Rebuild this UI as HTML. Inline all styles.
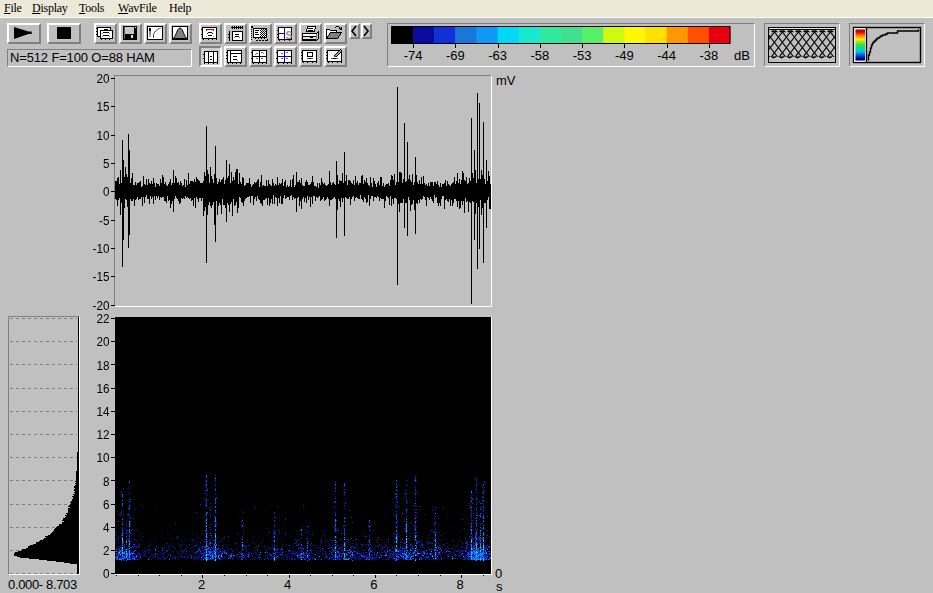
<!DOCTYPE html>
<html><head><meta charset="utf-8"><style>
html,body{margin:0;padding:0}
body{width:933px;height:593px;overflow:hidden;background:#c0c0c0;position:relative;font-family:"Liberation Sans",sans-serif}
#menu{position:absolute;left:0;top:0;width:933px;height:17px;background:#ece9d8;border-bottom:1px solid #fdfdfa}
.mi{position:absolute;top:1px;font-family:"Liberation Serif",serif;font-size:12px;line-height:14px;color:#000;letter-spacing:-0.25px}
.mi u{text-decoration:underline;text-underline-offset:1px}
.btn{position:absolute;box-sizing:border-box;border:2px solid;border-color:#fff #808080 #808080 #fff;background:#c0c0c0}
.btn.pr{border-color:#808080 #fff #fff #808080;background:repeating-conic-gradient(#dcdcdc 0 25%,#c0c0c0 0 50%) 0 0/2px 2px}
.btn svg{margin:-2px}
.sunk{position:absolute;box-sizing:border-box;border:1px solid;border-color:#808080 #fff #fff #808080}
.txt{position:absolute;font-size:13px;line-height:15px;color:#000;white-space:nowrap}
.c{text-align:center}
.lab{position:absolute;left:60px;width:49.5px;text-align:right;font-size:13.6px;line-height:15px;color:#000;transform:scaleX(0.86);transform-origin:100% 50%}
.tick{position:absolute;left:111px;width:4px;height:1px;background:#000}
.blk{position:absolute;box-sizing:border-box;border:2px solid #000}
</style></head><body>
<div id="menu"></div>
<div class="mi" style="left:4px"><u>F</u>ile</div>
<div class="mi" style="left:32px"><u>D</u>isplay</div>
<div class="mi" style="left:79px"><u>T</u>ools</div>
<div class="mi" style="left:118px"><u>W</u>avFile</div>
<div class="mi" style="left:169px">Help</div>
<div class="btn" style="left:7px;top:23px;width:34px;height:21px"><svg width="34" height="21" style="position:absolute;left:0;top:0"><polygon points="7,3.9 21.5,8.6 24.7,8.6 24.7,10.9 21.5,10.9 7,16" fill="#000"/></svg></div>
<div class="btn" style="left:47px;top:23px;width:34px;height:21px"><svg width="34" height="21" style="position:absolute;left:0;top:0"><rect x="10" y="4" width="14" height="12" fill="#000"/></svg></div>
<div class="btn" style="left:94px;top:23px;width:23px;height:21px"><svg width="23" height="21" style="position:absolute;left:0;top:0" shape-rendering="crispEdges"><rect x="3" y="4" width="14" height="10" fill="#000"/><rect x="4" y="5" width="12" height="8" fill="#fff"/><rect x="2" y="5" width="1" height="1" fill="#000"/><rect x="2" y="8" width="1" height="1" fill="#000"/><rect x="2" y="11" width="1" height="1" fill="#000"/><rect x="6" y="7" width="13" height="9" fill="#000"/><rect x="7" y="8" width="11" height="7" fill="#fff"/><rect x="7" y="16" width="1" height="1" fill="#000"/><rect x="11" y="16" width="1" height="1" fill="#000"/><rect x="15" y="16" width="1" height="1" fill="#000"/><rect x="10" y="6" width="4" height="1" fill="#000"/><rect x="9" y="9" width="6" height="1" fill="#000"/><rect x="8" y="10" width="1" height="1" fill="#808080"/><rect x="15" y="10" width="1" height="1" fill="#808080"/><rect x="9" y="12" width="6" height="1" fill="#000"/><rect x="8" y="13" width="1" height="1" fill="#808080"/><rect x="15" y="13" width="1" height="1" fill="#808080"/></svg></div>
<div class="btn" style="left:119px;top:23px;width:23px;height:21px"><svg width="23" height="21" style="position:absolute;left:0;top:0" shape-rendering="crispEdges"><rect x="4" y="3" width="14" height="14" fill="#000"/><rect x="6" y="4" width="9" height="7" fill="#c4c4c4"/><rect x="7" y="5" width="7" height="1" fill="#d8d8d8"/><rect x="5" y="4" width="1" height="12" fill="#606060"/><rect x="16" y="4" width="1" height="1" fill="#fff"/><rect x="7" y="12" width="8" height="4" fill="#000"/><rect x="12" y="12" width="2" height="3" fill="#e0e0e0"/></svg></div>
<div class="btn" style="left:144px;top:23px;width:23px;height:21px"><svg width="23" height="21" style="position:absolute;left:0;top:0" shape-rendering="crispEdges"><rect x="3" y="3" width="16" height="14" fill="#000"/><rect x="4" y="4" width="14" height="12" fill="#fff"/><rect x="5" y="5" width="2" height="3" fill="#000"/><rect x="5" y="8" width="2" height="3" fill="#808080"/><rect x="5" y="11" width="2" height="3" fill="#a8a8a8"/><polyline points="9.5,14.5 9.5,11.5 10.5,9.5 11.5,8 13,6.8 14.5,5.8 16.5,5.2" fill="none" stroke="#000" stroke-width="1" stroke-dasharray="1.5 0.5" shape-rendering="auto"/></svg></div>
<div class="btn" style="left:169px;top:23px;width:23px;height:21px"><svg width="23" height="21" style="position:absolute;left:0;top:0" shape-rendering="crispEdges"><rect x="3" y="3" width="16" height="14" fill="#000"/><rect x="4" y="4" width="14" height="12" fill="#fff"/><path d="M4 15.5 C7 14 8 5 11 5 C14 5 15 14 18 15.5 Z" fill="#808080" stroke="#000" stroke-width="1" shape-rendering="auto"/></svg></div>
<div class="btn" style="left:199px;top:23px;width:23px;height:21px"><svg width="23" height="21" style="position:absolute;left:0;top:0" shape-rendering="crispEdges"><rect x="3" y="4" width="15" height="12" fill="#000"/><rect x="4" y="5" width="13" height="10" fill="#fff"/><rect x="2" y="6" width="1" height="1" fill="#000"/><rect x="2" y="11" width="1" height="1" fill="#000"/><rect x="4" y="16" width="1" height="1" fill="#000"/><rect x="9" y="16" width="1" height="1" fill="#000"/><rect x="13" y="16" width="1" height="1" fill="#000"/><rect x="17" y="16" width="1" height="1" fill="#000"/><rect x="7" y="6" width="8" height="1" fill="#b00000"/><rect x="7" y="7" width="1" height="1" fill="#b00000"/><rect x="14" y="7" width="1" height="1" fill="#b00000"/><rect x="9" y="9" width="4" height="1" fill="#000"/><rect x="8" y="10" width="1" height="1" fill="#000"/><rect x="13" y="10" width="1" height="1" fill="#000"/><rect x="9" y="12" width="4" height="1" fill="#000"/><rect x="7" y="13" width="1" height="1" fill="#808080"/><rect x="14" y="13" width="1" height="1" fill="#808080"/></svg></div>
<div class="btn" style="left:224px;top:23px;width:23px;height:21px"><svg width="23" height="21" style="position:absolute;left:0;top:0" shape-rendering="crispEdges"><rect x="8" y="8" width="11" height="10" fill="#000"/><rect x="9" y="9" width="9" height="8" fill="#fff"/><rect x="5" y="8" width="1" height="10" fill="#000"/><rect x="4" y="11" width="1" height="1" fill="#000"/><rect x="4" y="14" width="1" height="1" fill="#000"/><rect x="7" y="4" width="12" height="1" fill="#000"/><rect x="8" y="3" width="1" height="3" fill="#000"/><rect x="10" y="3" width="1" height="3" fill="#000"/><rect x="12" y="3" width="1" height="3" fill="#000"/><rect x="14" y="3" width="1" height="3" fill="#000"/><rect x="16" y="3" width="1" height="3" fill="#000"/><rect x="18" y="3" width="1" height="3" fill="#000"/><rect x="11" y="11" width="4" height="1" fill="#000"/><rect x="11" y="13" width="4" height="1" fill="#000"/><rect x="10" y="14" width="1" height="1" fill="#808080"/><rect x="15" y="14" width="1" height="1" fill="#808080"/></svg></div>
<div class="btn" style="left:249px;top:23px;width:23px;height:21px"><svg width="23" height="21" style="position:absolute;left:0;top:0" shape-rendering="crispEdges"><rect x="4" y="5" width="14" height="10" fill="#000"/><rect x="5" y="6" width="12" height="8" fill="#fff"/><rect x="6" y="7" width="4" height="1" fill="#000"/><rect x="6" y="9" width="3" height="1" fill="#000"/><rect x="6" y="11" width="4" height="1" fill="#000"/><rect x="11" y="7" width="1" height="1" fill="#000"/><rect x="11" y="9" width="1" height="1" fill="#000"/><rect x="11" y="11" width="1" height="1" fill="#000"/><rect x="11" y="13" width="1" height="1" fill="#000"/><rect x="12" y="6" width="1" height="1" fill="#000"/><rect x="12" y="8" width="1" height="1" fill="#000"/><rect x="12" y="10" width="1" height="1" fill="#000"/><rect x="12" y="12" width="1" height="1" fill="#000"/><rect x="13" y="7" width="1" height="1" fill="#000"/><rect x="13" y="9" width="1" height="1" fill="#000"/><rect x="13" y="11" width="1" height="1" fill="#000"/><rect x="13" y="13" width="1" height="1" fill="#000"/><rect x="14" y="6" width="1" height="1" fill="#000"/><rect x="14" y="8" width="1" height="1" fill="#000"/><rect x="14" y="10" width="1" height="1" fill="#000"/><rect x="14" y="12" width="1" height="1" fill="#000"/><rect x="15" y="7" width="1" height="1" fill="#000"/><rect x="15" y="9" width="1" height="1" fill="#000"/><rect x="15" y="11" width="1" height="1" fill="#000"/><rect x="15" y="13" width="1" height="1" fill="#000"/><rect x="16" y="6" width="1" height="1" fill="#000"/><rect x="16" y="8" width="1" height="1" fill="#000"/><rect x="16" y="10" width="1" height="1" fill="#000"/><rect x="16" y="12" width="1" height="1" fill="#000"/><rect x="2" y="3" width="2" height="2" fill="#000"/><rect x="2" y="6" width="1" height="1" fill="#000"/><rect x="2" y="8" width="1" height="1" fill="#000"/><rect x="2" y="10" width="1" height="1" fill="#000"/><rect x="2" y="12" width="1" height="1" fill="#000"/><rect x="2" y="14" width="1" height="1" fill="#000"/><rect x="2" y="16" width="1" height="1" fill="#000"/><rect x="7" y="17" width="2" height="1" fill="#000"/><rect x="10" y="17" width="2" height="1" fill="#000"/><rect x="13" y="17" width="2" height="1" fill="#000"/><rect x="16" y="17" width="2" height="1" fill="#000"/><rect x="18" y="16" width="1" height="2" fill="#000"/><rect x="6" y="15" width="1" height="1" fill="#000"/><rect x="9" y="15" width="1" height="1" fill="#000"/><rect x="12" y="15" width="1" height="1" fill="#000"/><rect x="15" y="15" width="1" height="1" fill="#000"/></svg></div>
<div class="btn" style="left:274px;top:23px;width:23px;height:21px"><svg width="23" height="21" style="position:absolute;left:0;top:0" shape-rendering="crispEdges"><rect x="4" y="4" width="14" height="13" fill="#000"/><rect x="5" y="5" width="12" height="11" fill="#fff"/><rect x="10" y="5" width="1" height="11" fill="#0000c0"/><rect x="5" y="10" width="5" height="1" fill="#0000c0"/><rect x="3" y="7" width="1" height="1" fill="#000"/><rect x="3" y="11" width="1" height="1" fill="#000"/><rect x="3" y="14" width="1" height="1" fill="#000"/><rect x="5" y="17" width="1" height="1" fill="#000"/><rect x="10" y="17" width="1" height="1" fill="#000"/><rect x="15" y="17" width="1" height="1" fill="#000"/><text x="11.5" y="15.5" font-family="Liberation Sans" font-weight="bold" font-size="10" fill="#909090">S</text></svg></div>
<div class="btn" style="left:299px;top:23px;width:23px;height:21px"><svg width="23" height="21" style="position:absolute;left:0;top:0" shape-rendering="crispEdges"><path d="M8.5 3.5 L16.5 3.5 L15.5 8.5 L7.5 8.5 Z" fill="#fff" stroke="#000" stroke-width="1"/><rect x="9" y="5" width="5" height="1" fill="#000"/><rect x="9" y="7" width="5" height="1" fill="#000"/><path d="M3.5 10.5 L17.5 10.5 L19.5 8.5 L19.5 15.5 L17.5 17.5 L3.5 17.5 Z" fill="#c0c0c0" stroke="#000" stroke-width="1"/><rect x="4" y="11" width="13" height="2" fill="#fff"/><rect x="4" y="13" width="13" height="1" fill="#000"/><rect x="4" y="14" width="13" height="2" fill="#e0e0e0"/><rect x="11" y="14" width="3" height="1" fill="#000"/><rect x="4" y="16" width="13" height="1" fill="#000"/><rect x="17" y="11" width="1" height="6" fill="#808080"/></svg></div>
<div class="btn" style="left:324px;top:23px;width:23px;height:21px"><svg width="23" height="21" style="position:absolute;left:0;top:0" shape-rendering="crispEdges"><path d="M2.5 6.5 L5.5 6.5 L6.5 7.5 L12.5 7.5 L12.5 9.5 L17.5 9.5 L13.5 15.5 L2.5 15.5 Z" fill="#fff" stroke="#000" stroke-width="1"/><path d="M6.5 9.5 L17.5 9.5 L13.5 15.5 L2.5 15.5 Z" fill="#808080" stroke="#000" stroke-width="1"/><path d="M11.5 4.5 Q14 2.5 16 5" fill="none" stroke="#000" stroke-width="1"/><rect x="15" y="5" width="3" height="1" fill="#000"/><rect x="16" y="6" width="2" height="1" fill="#000"/><rect x="17" y="4" width="1" height="3" fill="#000"/></svg></div>
<div class="btn pr" style="left:199px;top:46px;width:23px;height:21px"><svg width="23" height="21" style="position:absolute;left:0;top:0" shape-rendering="crispEdges"><rect x="5" y="5" width="14" height="12" fill="#000"/><rect x="6" y="6" width="12" height="10" fill="#fff"/><rect x="9" y="5" width="1" height="12" fill="#000"/><rect x="14" y="5" width="1" height="12" fill="#000"/><rect x="11" y="10" width="2" height="1" fill="#000"/><rect x="11" y="13" width="2" height="1" fill="#000"/><rect x="4" y="8" width="1" height="1" fill="#000"/><rect x="4" y="12" width="1" height="1" fill="#000"/><rect x="5" y="17" width="1" height="1" fill="#000"/><rect x="9" y="17" width="1" height="1" fill="#000"/><rect x="14" y="17" width="1" height="1" fill="#000"/><rect x="18" y="17" width="1" height="1" fill="#000"/></svg></div>
<div class="btn" style="left:224px;top:46px;width:23px;height:21px"><svg width="23" height="21" style="position:absolute;left:0;top:0" shape-rendering="crispEdges"><rect x="3" y="4" width="15" height="13" fill="#000"/><rect x="4" y="5" width="13" height="11" fill="#fff"/><rect x="6" y="4" width="1" height="13" fill="#000"/><rect x="6" y="7" width="11" height="1" fill="#000"/><rect x="9" y="10" width="4" height="1" fill="#000"/><rect x="9" y="13" width="4" height="1" fill="#000"/><rect x="13" y="14" width="1" height="1" fill="#808080"/><rect x="2" y="6" width="1" height="1" fill="#000"/><rect x="2" y="9" width="1" height="1" fill="#000"/><rect x="2" y="12" width="1" height="1" fill="#000"/><rect x="4" y="17" width="1" height="1" fill="#000"/><rect x="8" y="17" width="1" height="1" fill="#000"/><rect x="12" y="17" width="1" height="1" fill="#000"/><rect x="16" y="17" width="1" height="1" fill="#000"/></svg></div>
<div class="btn" style="left:249px;top:46px;width:23px;height:21px"><svg width="23" height="21" style="position:absolute;left:0;top:0" shape-rendering="crispEdges"><rect x="3" y="4" width="15" height="13" fill="#000"/><rect x="4" y="5" width="13" height="11" fill="#fff"/><rect x="10" y="4" width="1" height="13" fill="#000"/><rect x="3" y="10" width="15" height="1" fill="#000"/><rect x="2" y="6" width="1" height="1" fill="#000"/><rect x="2" y="12" width="1" height="1" fill="#000"/><rect x="4" y="17" width="1" height="1" fill="#000"/><rect x="9" y="17" width="1" height="1" fill="#000"/><rect x="13" y="17" width="1" height="1" fill="#000"/><rect x="17" y="17" width="1" height="1" fill="#000"/><rect x="7" y="7" width="2" height="1" fill="#606060"/><rect x="12" y="6" width="2" height="1" fill="#606060"/><rect x="7" y="12" width="2" height="1" fill="#606060"/><rect x="12" y="12" width="2" height="1" fill="#606060"/><rect x="6" y="8" width="1" height="1" fill="#808080"/><rect x="14" y="7" width="1" height="1" fill="#808080"/></svg></div>
<div class="btn" style="left:274px;top:46px;width:23px;height:21px"><svg width="23" height="21" style="position:absolute;left:0;top:0" shape-rendering="crispEdges"><rect x="3" y="4" width="15" height="13" fill="#000"/><rect x="4" y="5" width="13" height="11" fill="#fff"/><rect x="10" y="5" width="1" height="11" fill="#0000c8"/><rect x="4" y="10" width="13" height="1" fill="#0000c8"/><rect x="2" y="6" width="1" height="1" fill="#000"/><rect x="2" y="12" width="1" height="1" fill="#000"/><rect x="4" y="17" width="1" height="1" fill="#000"/><rect x="9" y="17" width="1" height="1" fill="#000"/><rect x="13" y="17" width="1" height="1" fill="#000"/><rect x="17" y="17" width="1" height="1" fill="#000"/><rect x="7" y="7" width="2" height="1" fill="#606060"/><rect x="12" y="6" width="2" height="1" fill="#606060"/><rect x="7" y="12" width="2" height="1" fill="#606060"/><rect x="12" y="12" width="2" height="1" fill="#606060"/></svg></div>
<div class="btn" style="left:299px;top:46px;width:23px;height:21px"><svg width="23" height="21" style="position:absolute;left:0;top:0" shape-rendering="crispEdges"><rect x="3" y="4" width="15" height="12" fill="#000"/><rect x="4" y="5" width="13" height="10" fill="#fff"/><rect x="8" y="6" width="6" height="5" fill="#000"/><rect x="9" y="7" width="4" height="3" fill="#fff"/><rect x="10" y="12" width="2" height="1" fill="#000"/><rect x="8" y="12" width="2" height="1" fill="#606060"/><rect x="12" y="12" width="2" height="1" fill="#606060"/><rect x="2" y="6" width="1" height="1" fill="#000"/><rect x="2" y="9" width="1" height="1" fill="#000"/><rect x="2" y="12" width="1" height="1" fill="#000"/><rect x="4" y="16" width="1" height="1" fill="#000"/><rect x="8" y="16" width="1" height="1" fill="#000"/><rect x="13" y="16" width="1" height="1" fill="#000"/><rect x="17" y="16" width="1" height="1" fill="#000"/></svg></div>
<div class="btn" style="left:324px;top:46px;width:23px;height:21px"><svg width="23" height="21" style="position:absolute;left:0;top:0" shape-rendering="crispEdges"><rect x="3" y="4" width="15" height="12" fill="#000"/><rect x="4" y="5" width="13" height="10" fill="#fff"/><rect x="9" y="12" width="3" height="1" fill="#000"/><rect x="7" y="12" width="2" height="1" fill="#606060"/><rect x="12" y="12" width="2" height="1" fill="#606060"/><rect x="2" y="6" width="1" height="1" fill="#000"/><rect x="2" y="9" width="1" height="1" fill="#000"/><rect x="2" y="12" width="1" height="1" fill="#000"/><rect x="4" y="16" width="1" height="1" fill="#000"/><rect x="8" y="16" width="1" height="1" fill="#000"/><rect x="13" y="16" width="1" height="1" fill="#000"/><rect x="17" y="16" width="1" height="1" fill="#000"/><path d="M10.5 9.5 L16.5 3.5 L18 5 L12 11 Z" fill="#a0a0a0" stroke="#000" stroke-width="1"/><rect x="10" y="10" width="2" height="1" fill="#404040"/></svg></div>
<div class="btn" style="left:349px;top:23px;width:11px;height:16px"><svg width="11" height="16" style="position:absolute;left:0;top:0"><polyline points="7,3 3,8 7,13" fill="none" stroke="#000" stroke-width="1.6"/></svg></div>
<div class="btn" style="left:361px;top:23px;width:11px;height:16px"><svg width="11" height="16" style="position:absolute;left:0;top:0"><polyline points="3,3 7,8 3,13" fill="none" stroke="#000" stroke-width="1.6"/></svg></div>
<div class="sunk" style="left:7px;top:49px;width:185px;height:18px"></div>
<div class="txt" style="left:10px;top:50px;letter-spacing:-0.15px">N=512 F=100 O=88 HAM</div>
<div class="sunk" style="left:387px;top:23px;width:368px;height:44px"></div>
<svg style="position:absolute;left:0;top:0" width="933" height="70"><rect x="392.00" y="27" width="21.5" height="16" fill="#000000"/><rect x="413.12" y="27" width="21.5" height="16" fill="#0a0aa0"/><rect x="434.25" y="27" width="21.5" height="16" fill="#1030d8"/><rect x="455.38" y="27" width="21.5" height="16" fill="#1878d8"/><rect x="476.50" y="27" width="21.5" height="16" fill="#1098f8"/><rect x="497.62" y="27" width="21.5" height="16" fill="#00d8f8"/><rect x="518.75" y="27" width="21.5" height="16" fill="#18e8d0"/><rect x="539.88" y="27" width="21.5" height="16" fill="#30e8a0"/><rect x="561.00" y="27" width="21.5" height="16" fill="#40e090"/><rect x="582.12" y="27" width="21.5" height="16" fill="#58f068"/><rect x="603.25" y="27" width="21.5" height="16" fill="#d0f810"/><rect x="624.38" y="27" width="21.5" height="16" fill="#fff800"/><rect x="645.50" y="27" width="21.5" height="16" fill="#ffe000"/><rect x="666.62" y="27" width="21.5" height="16" fill="#ff9800"/><rect x="687.75" y="27" width="21.5" height="16" fill="#ff5000"/><rect x="708.88" y="27" width="21.5" height="16" fill="#e80010"/><rect x="391.5" y="26.5" width="338.5" height="17" fill="none" stroke="#000" stroke-width="1"/><rect x="413" y="44" width="1" height="4" fill="#000" shape-rendering="crispEdges"/><rect x="455" y="44" width="1" height="4" fill="#000" shape-rendering="crispEdges"/><rect x="498" y="44" width="1" height="4" fill="#000" shape-rendering="crispEdges"/><rect x="540" y="44" width="1" height="4" fill="#000" shape-rendering="crispEdges"/><rect x="582" y="44" width="1" height="4" fill="#000" shape-rendering="crispEdges"/><rect x="624" y="44" width="1" height="4" fill="#000" shape-rendering="crispEdges"/><rect x="667" y="44" width="1" height="4" fill="#000" shape-rendering="crispEdges"/><rect x="709" y="44" width="1" height="4" fill="#000" shape-rendering="crispEdges"/></svg>
<div class="txt c" style="left:393.1px;top:48px;width:40px">-74</div>
<div class="txt c" style="left:435.4px;top:48px;width:40px">-69</div>
<div class="txt c" style="left:477.6px;top:48px;width:40px">-63</div>
<div class="txt c" style="left:519.9px;top:48px;width:40px">-58</div>
<div class="txt c" style="left:562.1px;top:48px;width:40px">-53</div>
<div class="txt c" style="left:604.4px;top:48px;width:40px">-49</div>
<div class="txt c" style="left:646.6px;top:48px;width:40px">-44</div>
<div class="txt c" style="left:688.9px;top:48px;width:40px">-38</div>
<div class="txt" style="left:734px;top:48px;">dB</div>
<div class="sunk" style="left:764px;top:23px;width:76px;height:44px"></div>
<svg style="position:absolute;left:0;top:0" width="933" height="70"><defs><clipPath id="hc"><rect x="769" y="30" width="66" height="27"/></clipPath></defs><rect x="768" y="27" width="68" height="36" fill="#000"/><rect x="769" y="28" width="66" height="1" fill="#e8e8e8"/><rect x="769" y="30" width="66" height="32" fill="#c0c0c0"/><g clip-path="url(#hc)" stroke="#000" stroke-width="1.1"><line x1="702.71" y1="22" x2="741.17" y2="72"/><line x1="718.09" y1="22" x2="679.63" y2="72"/><line x1="710.71" y1="22" x2="749.17" y2="72"/><line x1="726.09" y1="22" x2="687.63" y2="72"/><line x1="718.71" y1="22" x2="757.17" y2="72"/><line x1="734.09" y1="22" x2="695.63" y2="72"/><line x1="726.71" y1="22" x2="765.17" y2="72"/><line x1="742.09" y1="22" x2="703.63" y2="72"/><line x1="734.71" y1="22" x2="773.17" y2="72"/><line x1="750.09" y1="22" x2="711.63" y2="72"/><line x1="742.71" y1="22" x2="781.17" y2="72"/><line x1="758.09" y1="22" x2="719.63" y2="72"/><line x1="750.71" y1="22" x2="789.17" y2="72"/><line x1="766.09" y1="22" x2="727.63" y2="72"/><line x1="758.71" y1="22" x2="797.17" y2="72"/><line x1="774.09" y1="22" x2="735.63" y2="72"/><line x1="766.71" y1="22" x2="805.17" y2="72"/><line x1="782.09" y1="22" x2="743.63" y2="72"/><line x1="774.71" y1="22" x2="813.17" y2="72"/><line x1="790.09" y1="22" x2="751.63" y2="72"/><line x1="782.71" y1="22" x2="821.17" y2="72"/><line x1="798.09" y1="22" x2="759.63" y2="72"/><line x1="790.71" y1="22" x2="829.17" y2="72"/><line x1="806.09" y1="22" x2="767.63" y2="72"/><line x1="798.71" y1="22" x2="837.17" y2="72"/><line x1="814.09" y1="22" x2="775.63" y2="72"/><line x1="806.71" y1="22" x2="845.17" y2="72"/><line x1="822.09" y1="22" x2="783.63" y2="72"/><line x1="814.71" y1="22" x2="853.17" y2="72"/><line x1="830.09" y1="22" x2="791.63" y2="72"/><line x1="822.71" y1="22" x2="861.17" y2="72"/><line x1="838.09" y1="22" x2="799.63" y2="72"/><line x1="830.71" y1="22" x2="869.17" y2="72"/><line x1="846.09" y1="22" x2="807.63" y2="72"/><line x1="838.71" y1="22" x2="877.17" y2="72"/><line x1="854.09" y1="22" x2="815.63" y2="72"/><line x1="846.71" y1="22" x2="885.17" y2="72"/><line x1="862.09" y1="22" x2="823.63" y2="72"/><line x1="854.71" y1="22" x2="893.17" y2="72"/><line x1="870.09" y1="22" x2="831.63" y2="72"/><line x1="862.71" y1="22" x2="901.17" y2="72"/><line x1="878.09" y1="22" x2="839.63" y2="72"/><line x1="870.71" y1="22" x2="909.17" y2="72"/><line x1="886.09" y1="22" x2="847.63" y2="72"/><line x1="878.71" y1="22" x2="917.17" y2="72"/><line x1="894.09" y1="22" x2="855.63" y2="72"/><line x1="886.71" y1="22" x2="925.17" y2="72"/><line x1="902.09" y1="22" x2="863.63" y2="72"/></g><rect x="771.4" y="31" width="6" height="1.2" fill="#000"/><rect x="779.4" y="31" width="6" height="1.2" fill="#000"/><rect x="787.4" y="31" width="6" height="1.2" fill="#000"/><rect x="795.4" y="31" width="6" height="1.2" fill="#000"/><rect x="803.4" y="31" width="6" height="1.2" fill="#000"/><rect x="811.4" y="31" width="6" height="1.2" fill="#000"/><rect x="819.4" y="31" width="6" height="1.2" fill="#000"/><rect x="827.4" y="31" width="6" height="1.2" fill="#000"/><path d="M771.1 56.5 Q773.6 59.5 776.1 56.5" fill="#000" stroke="#000" stroke-width="1"/><path d="M779.1 56.5 Q781.6 59.5 784.1 56.5" fill="#000" stroke="#000" stroke-width="1"/><path d="M787.1 56.5 Q789.6 59.5 792.1 56.5" fill="#000" stroke="#000" stroke-width="1"/><path d="M795.1 56.5 Q797.6 59.5 800.1 56.5" fill="#000" stroke="#000" stroke-width="1"/><path d="M803.1 56.5 Q805.6 59.5 808.1 56.5" fill="#000" stroke="#000" stroke-width="1"/><path d="M811.1 56.5 Q813.6 59.5 816.1 56.5" fill="#000" stroke="#000" stroke-width="1"/><path d="M819.1 56.5 Q821.6 59.5 824.1 56.5" fill="#000" stroke="#000" stroke-width="1"/><path d="M827.1 56.5 Q829.6 59.5 832.1 56.5" fill="#000" stroke="#000" stroke-width="1"/></svg>
<div class="sunk" style="left:849px;top:23px;width:76px;height:44px"></div>
<svg style="position:absolute;left:0;top:0" width="933" height="70"><defs><linearGradient id="cg" x1="0" y1="0" x2="0" y2="1"><stop offset="0" stop-color="#a00000"/><stop offset="0.08" stop-color="#e00000"/><stop offset="0.2" stop-color="#ff8000"/><stop offset="0.32" stop-color="#f8f000"/><stop offset="0.48" stop-color="#40e040"/><stop offset="0.62" stop-color="#00d8a0"/><stop offset="0.72" stop-color="#00c0f0"/><stop offset="0.82" stop-color="#0060e0"/><stop offset="0.92" stop-color="#0010a0"/><stop offset="1" stop-color="#000050"/></linearGradient></defs><rect x="853.5" y="27.5" width="67" height="35" fill="#c0c0c0" stroke="#000" stroke-width="1.4"/><rect x="854" y="28" width="12" height="34" fill="#e8e8e8"/><rect x="855.5" y="29.5" width="9.5" height="31" fill="url(#cg)"/><line x1="866.5" y1="27" x2="866.5" y2="63" stroke="#000" stroke-width="1.3"/><path d="M868.5 60.5 V55 H869.5 V52 H870.5 V48 H871.5 V45 H872.5 V43 H873.5 V42 H874.5 V41 H875.5 V40 H876.5 V39 H877.5 V38 H879.5 V37 H880.5 V36 H882.5 V35 H885.5 V34 H887.5 V33 H897.5 V31 H918.5 V29.5" fill="none" stroke="#000" stroke-width="1.4" stroke-linejoin="miter"/></svg>
<div class="sunk" style="left:114px;top:75px;width:378px;height:232px"></div>
<div class="lab" style="top:71.0px">20</div>
<div class="tick" style="top:78px"></div>
<div class="lab" style="top:99.3px">15</div>
<div class="tick" style="top:106px"></div>
<div class="lab" style="top:127.7px">10</div>
<div class="tick" style="top:135px"></div>
<div class="lab" style="top:156.0px">5</div>
<div class="tick" style="top:163px"></div>
<div class="lab" style="top:184.3px">0</div>
<div class="tick" style="top:191px"></div>
<div class="lab" style="top:212.7px">-5</div>
<div class="tick" style="top:220px"></div>
<div class="lab" style="top:241.0px">-10</div>
<div class="tick" style="top:248px"></div>
<div class="lab" style="top:269.4px">-15</div>
<div class="tick" style="top:276px"></div>
<div class="lab" style="top:297.7px">-20</div>
<div class="tick" style="top:305px"></div>
<div class="txt" style="left:496px;top:73px;">mV</div>
<svg style="position:absolute;left:0;top:0" width="933" height="593"><path d="M115.5 181V199M116.5 181V200M117.5 178V206M118.5 177V200M119.5 184V198M120.5 170V215M121.5 183V203M122.5 140V267M123.5 160V240M124.5 177V208M125.5 167V199M126.5 174V200M127.5 177V207M128.5 134V248M129.5 150V235M130.5 183V199M131.5 178V201M132.5 173V201M133.5 185V199M134.5 185V206M135.5 182V200M136.5 185V199M137.5 183V197M138.5 183V200M139.5 182V199M140.5 181V199M141.5 187V197M142.5 186V206M143.5 176V197M144.5 184V203M145.5 185V197M146.5 179V195M147.5 185V199M148.5 179V199M149.5 183V204M150.5 184V196M151.5 181V199M152.5 184V197M153.5 178V204M154.5 183V196M155.5 187V200M156.5 183V196M157.5 184V198M158.5 184V196M159.5 186V200M160.5 179V197M161.5 183V198M162.5 175V197M163.5 177V197M164.5 184V201M165.5 182V201M166.5 185V203M167.5 186V196M168.5 184V201M169.5 182V200M170.5 179V208M171.5 185V204M172.5 183V201M173.5 170V212M174.5 183V199M175.5 176V196M176.5 178V198M177.5 183V199M178.5 182V201M179.5 185V204M180.5 181V203M181.5 183V198M182.5 186V199M183.5 185V198M184.5 179V199M185.5 187V196M186.5 180V198M187.5 185V197M188.5 173V198M189.5 184V199M190.5 181V198M191.5 181V201M192.5 181V200M193.5 182V206M194.5 179V198M195.5 182V208M196.5 177V197M197.5 179V199M198.5 180V202M199.5 181V198M200.5 183V198M201.5 183V201M202.5 183V198M203.5 181V216M204.5 172V211M205.5 176V207M206.5 126V263M207.5 170V215M208.5 174V205M209.5 183V202M210.5 167V206M211.5 176V208M212.5 179V205M213.5 183V202M214.5 174V225M215.5 146V242M216.5 178V201M217.5 184V215M218.5 182V206M219.5 179V203M220.5 182V205M221.5 180V214M222.5 179V199M223.5 177V205M224.5 184V205M225.5 180V208M226.5 160V222M227.5 178V203M228.5 176V205M229.5 164V212M230.5 183V204M231.5 172V202M232.5 181V216M233.5 177V199M234.5 180V206M235.5 172V205M236.5 169V202M237.5 169V213M238.5 184V208M239.5 173V197M240.5 182V198M241.5 184V202M242.5 177V203M243.5 178V206M244.5 186V201M245.5 185V199M246.5 183V198M247.5 183V197M248.5 183V197M249.5 178V196M250.5 184V203M251.5 187V196M252.5 185V196M253.5 184V205M254.5 182V199M255.5 183V197M256.5 182V201M257.5 180V196M258.5 179V199M259.5 187V200M260.5 182V203M261.5 175V204M262.5 186V206M263.5 185V200M264.5 186V200M265.5 186V199M266.5 180V198M267.5 186V205M268.5 180V198M269.5 184V206M270.5 185V203M271.5 186V199M272.5 179V204M273.5 183V195M274.5 186V204M275.5 184V197M276.5 185V198M277.5 177V206M278.5 185V198M279.5 183V203M280.5 184V196M281.5 183V204M282.5 179V204M283.5 186V198M284.5 182V195M285.5 180V199M286.5 187V198M287.5 185V197M288.5 187V197M289.5 186V200M290.5 180V196M291.5 187V195M292.5 179V200M293.5 175V197M294.5 187V199M295.5 185V198M296.5 172V212M297.5 182V198M298.5 182V197M299.5 180V206M300.5 183V201M301.5 178V209M302.5 185V199M303.5 186V197M304.5 186V202M305.5 182V198M306.5 180V203M307.5 182V196M308.5 185V200M309.5 185V197M310.5 184V207M311.5 182V197M312.5 176V204M313.5 182V196M314.5 186V196M315.5 186V201M316.5 187V197M317.5 183V198M318.5 188V197M319.5 183V196M320.5 185V201M321.5 178V200M322.5 182V199M323.5 184V197M324.5 183V201M325.5 185V200M326.5 186V199M327.5 185V197M328.5 184V199M329.5 171V206M330.5 182V200M331.5 185V200M332.5 183V199M333.5 182V198M334.5 184V197M335.5 185V199M336.5 161V238M337.5 175V210M338.5 184V199M339.5 180V201M340.5 181V207M341.5 181V198M342.5 173V202M343.5 183V198M344.5 152V236M345.5 181V197M346.5 175V198M347.5 185V199M348.5 180V199M349.5 180V197M350.5 181V205M351.5 183V199M352.5 184V197M353.5 180V196M354.5 185V201M355.5 176V198M356.5 183V197M357.5 181V198M358.5 185V199M359.5 183V199M360.5 183V195M361.5 176V199M362.5 175V200M363.5 184V202M364.5 180V197M365.5 182V199M366.5 178V203M367.5 183V202M368.5 185V195M369.5 186V206M370.5 177V199M371.5 183V196M372.5 187V196M373.5 178V201M374.5 181V197M375.5 184V197M376.5 187V198M377.5 183V196M378.5 181V197M379.5 185V201M380.5 177V198M381.5 177V199M382.5 186V199M383.5 183V199M384.5 187V208M385.5 185V201M386.5 184V196M387.5 184V197M388.5 183V198M389.5 186V205M390.5 180V196M391.5 175V206M392.5 176V199M393.5 180V204M394.5 174V198M395.5 185V198M396.5 182V199M397.5 87V285M398.5 182V204M399.5 172V212M400.5 172V203M401.5 173V203M402.5 183V203M403.5 179V199M404.5 123V228M405.5 182V203M406.5 181V203M407.5 142V236M408.5 179V197M409.5 175V200M410.5 180V211M411.5 182V205M412.5 174V204M413.5 185V200M414.5 182V210M415.5 157V234M416.5 175V203M417.5 182V204M418.5 184V200M419.5 180V203M420.5 184V199M421.5 177V200M422.5 184V199M423.5 176V196M424.5 183V197M425.5 185V200M426.5 184V206M427.5 186V197M428.5 183V198M429.5 186V200M430.5 182V197M431.5 182V199M432.5 182V201M433.5 186V203M434.5 182V195M435.5 182V198M436.5 184V197M437.5 181V203M438.5 185V206M439.5 187V203M440.5 183V206M441.5 187V199M442.5 184V196M443.5 184V196M444.5 183V209M445.5 180V200M446.5 186V199M447.5 181V201M448.5 184V202M449.5 185V199M450.5 186V206M451.5 184V200M452.5 183V206M453.5 182V203M454.5 177V199M455.5 184V199M456.5 181V201M457.5 173V207M458.5 183V201M459.5 179V209M460.5 184V208M461.5 180V201M462.5 171V205M463.5 173V201M464.5 180V213M465.5 181V198M466.5 177V202M467.5 184V201M468.5 183V212M469.5 178V202M470.5 181V203M471.5 118V304M472.5 173V201M473.5 178V202M474.5 150V240M475.5 170V214M476.5 183V203M477.5 93V269M478.5 179V207M479.5 103V249M480.5 179V200M481.5 170V215M482.5 175V208M483.5 122V263M484.5 179V203M485.5 184V203M486.5 160V228M487.5 181V200M488.5 171V197M489.5 176V209M490.5 184V209" stroke="#000" stroke-width="1" fill="none" shape-rendering="crispEdges"/></svg>
<div style="position:absolute;left:115px;top:317px;width:376px;height:257px;background:#000"></div>
<svg style="position:absolute;left:0;top:0" width="933" height="593" shape-rendering="crispEdges"><defs><filter id="bl" x="0" y="0" width="1" height="1"><feGaussianBlur stdDeviation="0.55"/></filter></defs><g filter="url(#bl)"><path d="M115 541h1v1h-1zM115 542h1v1h-1zM115 551h1v1h-1zM115 556h1v1h-1zM116 556h1v1h-1zM117 551h1v1h-1zM117 554h1v1h-1zM118 541h1v1h-1zM118 543h1v1h-1zM118 546h1v1h-1zM118 551h1v1h-1zM118 554h1v1h-1zM118 558h1v1h-1zM119 557h1v1h-1zM120 552h1v1h-1zM121 496h1v1h-1zM121 501h1v1h-1zM121 509h1v1h-1zM121 511h1v1h-1zM121 537h1v1h-1zM121 538h1v1h-1zM121 545h1v1h-1zM121 553h1v1h-1zM121 554h1v1h-1zM121 557h1v1h-1zM122 489h1v1h-1zM122 492h1v1h-1zM122 497h1v1h-1zM122 510h1v1h-1zM122 515h1v1h-1zM122 554h1v1h-1zM122 557h1v1h-1zM123 500h1v1h-1zM123 514h1v1h-1zM123 530h1v1h-1zM123 533h1v1h-1zM123 541h1v1h-1zM123 549h1v1h-1zM123 555h1v1h-1zM124 549h1v1h-1zM124 555h1v1h-1zM124 559h1v1h-1zM125 524h1v1h-1zM125 533h1v1h-1zM125 552h1v1h-1zM125 554h1v1h-1zM125 556h1v1h-1zM125 557h1v1h-1zM125 559h1v1h-1zM126 520h1v1h-1zM126 526h1v1h-1zM126 529h1v1h-1zM126 530h1v1h-1zM126 543h1v1h-1zM126 546h1v1h-1zM126 559h1v1h-1zM127 530h1v1h-1zM127 535h1v1h-1zM127 550h1v1h-1zM127 551h1v1h-1zM127 552h1v1h-1zM127 557h1v1h-1zM128 487h1v1h-1zM128 501h1v1h-1zM128 508h1v1h-1zM128 524h1v1h-1zM128 550h1v1h-1zM128 552h1v1h-1zM128 554h1v1h-1zM128 555h1v1h-1zM128 556h1v1h-1zM128 557h1v1h-1zM129 481h1v1h-1zM129 488h1v1h-1zM129 497h1v1h-1zM129 501h1v1h-1zM129 504h1v1h-1zM129 513h1v1h-1zM129 514h1v1h-1zM130 505h1v1h-1zM130 517h1v1h-1zM130 518h1v1h-1zM130 539h1v1h-1zM130 556h1v1h-1zM130 557h1v1h-1zM130 558h1v1h-1zM131 548h1v1h-1zM131 551h1v1h-1zM131 555h1v1h-1zM131 556h1v1h-1zM131 557h1v1h-1zM131 559h1v1h-1zM132 541h1v1h-1zM132 546h1v1h-1zM132 554h1v1h-1zM132 559h1v1h-1zM133 518h1v1h-1zM133 547h1v1h-1zM133 557h1v1h-1zM133 559h1v1h-1zM134 525h1v1h-1zM134 533h1v1h-1zM134 553h1v1h-1zM135 509h1v1h-1zM135 547h1v1h-1zM135 553h1v1h-1zM135 555h1v1h-1zM135 556h1v1h-1zM135 557h1v1h-1zM135 558h1v1h-1zM135 559h1v1h-1zM136 547h1v1h-1zM136 550h1v1h-1zM137 547h1v1h-1zM137 553h1v1h-1zM137 554h1v1h-1zM137 555h1v1h-1zM137 556h1v1h-1zM138 543h1v1h-1zM138 547h1v1h-1zM138 552h1v1h-1zM138 554h1v1h-1zM138 556h1v1h-1zM138 559h1v1h-1zM139 545h1v1h-1zM139 546h1v1h-1zM139 553h1v1h-1zM139 556h1v1h-1zM140 534h1v1h-1zM140 554h1v1h-1zM140 555h1v1h-1zM140 556h1v1h-1zM141 504h1v1h-1zM141 539h1v1h-1zM142 508h1v1h-1zM142 555h1v1h-1zM143 536h1v1h-1zM143 550h1v1h-1zM143 552h1v1h-1zM143 557h1v1h-1zM144 549h1v1h-1zM144 553h1v1h-1zM144 554h1v1h-1zM144 555h1v1h-1zM144 556h1v1h-1zM145 548h1v1h-1zM145 553h1v1h-1zM146 551h1v1h-1zM146 556h1v1h-1zM147 550h1v1h-1zM148 552h1v1h-1zM148 553h1v1h-1zM148 558h1v1h-1zM149 540h1v1h-1zM149 550h1v1h-1zM150 542h1v1h-1zM151 555h1v1h-1zM151 556h1v1h-1zM151 559h1v1h-1zM152 553h1v1h-1zM152 555h1v1h-1zM153 557h1v1h-1zM154 547h1v1h-1zM154 555h1v1h-1zM154 556h1v1h-1zM155 537h1v1h-1zM155 542h1v1h-1zM155 553h1v1h-1zM155 556h1v1h-1zM155 557h1v1h-1zM156 548h1v1h-1zM157 509h1v1h-1zM157 548h1v1h-1zM157 553h1v1h-1zM157 556h1v1h-1zM158 557h1v1h-1zM158 558h1v1h-1zM158 559h1v1h-1zM160 552h1v1h-1zM161 554h1v1h-1zM162 530h1v1h-1zM162 553h1v1h-1zM162 554h1v1h-1zM162 556h1v1h-1zM163 547h1v1h-1zM163 553h1v1h-1zM163 556h1v1h-1zM163 557h1v1h-1zM163 559h1v1h-1zM164 547h1v1h-1zM164 552h1v1h-1zM165 558h1v1h-1zM165 559h1v1h-1zM166 550h1v1h-1zM166 556h1v1h-1zM167 532h1v1h-1zM167 551h1v1h-1zM167 553h1v1h-1zM167 556h1v1h-1zM168 546h1v1h-1zM168 547h1v1h-1zM168 549h1v1h-1zM168 554h1v1h-1zM170 538h1v1h-1zM170 540h1v1h-1zM170 545h1v1h-1zM170 553h1v1h-1zM171 548h1v1h-1zM172 543h1v1h-1zM172 557h1v1h-1zM173 545h1v1h-1zM173 546h1v1h-1zM173 551h1v1h-1zM173 557h1v1h-1zM173 558h1v1h-1zM174 548h1v1h-1zM175 529h1v1h-1zM175 548h1v1h-1zM175 556h1v1h-1zM175 558h1v1h-1zM175 559h1v1h-1zM176 538h1v1h-1zM176 557h1v1h-1zM177 551h1v1h-1zM177 552h1v1h-1zM178 544h1v1h-1zM178 555h1v1h-1zM178 557h1v1h-1zM178 559h1v1h-1zM180 551h1v1h-1zM180 555h1v1h-1zM180 556h1v1h-1zM180 558h1v1h-1zM181 541h1v1h-1zM181 549h1v1h-1zM181 550h1v1h-1zM181 553h1v1h-1zM181 556h1v1h-1zM182 545h1v1h-1zM182 556h1v1h-1zM182 557h1v1h-1zM183 552h1v1h-1zM184 556h1v1h-1zM185 540h1v1h-1zM185 552h1v1h-1zM185 554h1v1h-1zM186 549h1v1h-1zM186 553h1v1h-1zM187 545h1v1h-1zM187 547h1v1h-1zM187 557h1v1h-1zM187 558h1v1h-1zM188 553h1v1h-1zM189 539h1v1h-1zM189 551h1v1h-1zM189 554h1v1h-1zM190 548h1v1h-1zM190 555h1v1h-1zM190 557h1v1h-1zM191 547h1v1h-1zM191 558h1v1h-1zM192 525h1v1h-1zM192 533h1v1h-1zM192 541h1v1h-1zM192 547h1v1h-1zM192 551h1v1h-1zM193 540h1v1h-1zM193 552h1v1h-1zM193 555h1v1h-1zM193 558h1v1h-1zM194 546h1v1h-1zM194 553h1v1h-1zM194 557h1v1h-1zM195 552h1v1h-1zM195 553h1v1h-1zM195 556h1v1h-1zM195 557h1v1h-1zM196 543h1v1h-1zM196 551h1v1h-1zM196 557h1v1h-1zM196 558h1v1h-1zM196 559h1v1h-1zM197 542h1v1h-1zM197 556h1v1h-1zM197 558h1v1h-1zM198 547h1v1h-1zM198 549h1v1h-1zM198 552h1v1h-1zM198 559h1v1h-1zM199 547h1v1h-1zM199 548h1v1h-1zM199 551h1v1h-1zM199 556h1v1h-1zM199 557h1v1h-1zM200 543h1v1h-1zM200 550h1v1h-1zM200 553h1v1h-1zM200 554h1v1h-1zM200 559h1v1h-1zM201 547h1v1h-1zM201 549h1v1h-1zM201 552h1v1h-1zM202 533h1v1h-1zM202 546h1v1h-1zM202 551h1v1h-1zM202 552h1v1h-1zM202 553h1v1h-1zM202 555h1v1h-1zM202 557h1v1h-1zM203 539h1v1h-1zM203 550h1v1h-1zM203 551h1v1h-1zM203 554h1v1h-1zM203 556h1v1h-1zM203 558h1v1h-1zM204 547h1v1h-1zM204 548h1v1h-1zM204 554h1v1h-1zM205 477h1v1h-1zM205 482h1v1h-1zM205 502h1v1h-1zM205 513h1v1h-1zM205 514h1v1h-1zM205 520h1v1h-1zM205 531h1v1h-1zM205 541h1v1h-1zM205 550h1v1h-1zM205 552h1v1h-1zM205 553h1v1h-1zM206 477h1v1h-1zM206 483h1v1h-1zM206 494h1v1h-1zM206 498h1v1h-1zM206 501h1v1h-1zM206 504h1v1h-1zM206 506h1v1h-1zM206 507h1v1h-1zM207 477h1v1h-1zM207 488h1v1h-1zM207 495h1v1h-1zM207 518h1v1h-1zM207 532h1v1h-1zM207 533h1v1h-1zM207 543h1v1h-1zM207 549h1v1h-1zM207 551h1v1h-1zM207 556h1v1h-1zM208 527h1v1h-1zM208 545h1v1h-1zM208 552h1v1h-1zM208 553h1v1h-1zM209 507h1v1h-1zM209 535h1v1h-1zM209 555h1v1h-1zM209 556h1v1h-1zM209 558h1v1h-1zM210 503h1v1h-1zM210 507h1v1h-1zM210 509h1v1h-1zM210 512h1v1h-1zM210 516h1v1h-1zM210 517h1v1h-1zM210 535h1v1h-1zM210 539h1v1h-1zM210 545h1v1h-1zM210 547h1v1h-1zM210 556h1v1h-1zM210 557h1v1h-1zM210 559h1v1h-1zM211 524h1v1h-1zM211 549h1v1h-1zM211 553h1v1h-1zM211 554h1v1h-1zM211 557h1v1h-1zM211 558h1v1h-1zM212 549h1v1h-1zM212 551h1v1h-1zM212 559h1v1h-1zM213 545h1v1h-1zM213 549h1v1h-1zM213 552h1v1h-1zM213 553h1v1h-1zM213 557h1v1h-1zM213 559h1v1h-1zM214 509h1v1h-1zM214 517h1v1h-1zM214 523h1v1h-1zM214 547h1v1h-1zM214 548h1v1h-1zM214 550h1v1h-1zM215 477h1v1h-1zM215 479h1v1h-1zM215 482h1v1h-1zM215 488h1v1h-1zM215 493h1v1h-1zM215 494h1v1h-1zM215 502h1v1h-1zM216 495h1v1h-1zM216 498h1v1h-1zM216 508h1v1h-1zM216 512h1v1h-1zM216 521h1v1h-1zM216 523h1v1h-1zM216 524h1v1h-1zM216 526h1v1h-1zM216 531h1v1h-1zM216 537h1v1h-1zM216 538h1v1h-1zM216 549h1v1h-1zM216 550h1v1h-1zM216 552h1v1h-1zM216 558h1v1h-1zM216 559h1v1h-1zM217 529h1v1h-1zM217 550h1v1h-1zM217 551h1v1h-1zM217 553h1v1h-1zM217 554h1v1h-1zM217 557h1v1h-1zM217 558h1v1h-1zM218 536h1v1h-1zM218 540h1v1h-1zM218 545h1v1h-1zM218 550h1v1h-1zM218 552h1v1h-1zM219 549h1v1h-1zM219 552h1v1h-1zM219 559h1v1h-1zM220 554h1v1h-1zM220 556h1v1h-1zM220 558h1v1h-1zM221 540h1v1h-1zM221 552h1v1h-1zM222 548h1v1h-1zM222 551h1v1h-1zM222 552h1v1h-1zM222 556h1v1h-1zM222 559h1v1h-1zM223 537h1v1h-1zM223 545h1v1h-1zM223 549h1v1h-1zM223 552h1v1h-1zM223 558h1v1h-1zM224 553h1v1h-1zM224 556h1v1h-1zM224 557h1v1h-1zM224 558h1v1h-1zM225 549h1v1h-1zM225 552h1v1h-1zM226 551h1v1h-1zM226 552h1v1h-1zM226 556h1v1h-1zM226 558h1v1h-1zM227 545h1v1h-1zM227 547h1v1h-1zM227 548h1v1h-1zM227 552h1v1h-1zM228 505h1v1h-1zM228 549h1v1h-1zM228 551h1v1h-1zM228 555h1v1h-1zM229 531h1v1h-1zM229 557h1v1h-1zM229 558h1v1h-1zM231 553h1v1h-1zM231 555h1v1h-1zM231 557h1v1h-1zM232 550h1v1h-1zM232 551h1v1h-1zM232 556h1v1h-1zM232 559h1v1h-1zM233 551h1v1h-1zM233 557h1v1h-1zM234 556h1v1h-1zM235 543h1v1h-1zM236 549h1v1h-1zM236 550h1v1h-1zM236 555h1v1h-1zM236 556h1v1h-1zM237 533h1v1h-1zM237 557h1v1h-1zM238 512h1v1h-1zM238 533h1v1h-1zM238 545h1v1h-1zM238 558h1v1h-1zM239 556h1v1h-1zM239 557h1v1h-1zM240 510h1v1h-1zM240 538h1v1h-1zM240 558h1v1h-1zM241 525h1v1h-1zM241 545h1v1h-1zM241 558h1v1h-1zM242 518h1v1h-1zM242 527h1v1h-1zM242 552h1v1h-1zM242 554h1v1h-1zM243 529h1v1h-1zM243 545h1v1h-1zM243 549h1v1h-1zM243 557h1v1h-1zM243 558h1v1h-1zM244 557h1v1h-1zM245 546h1v1h-1zM245 547h1v1h-1zM245 548h1v1h-1zM245 552h1v1h-1zM245 554h1v1h-1zM245 555h1v1h-1zM245 558h1v1h-1zM246 542h1v1h-1zM246 549h1v1h-1zM246 551h1v1h-1zM246 555h1v1h-1zM246 559h1v1h-1zM247 554h1v1h-1zM248 552h1v1h-1zM248 553h1v1h-1zM248 555h1v1h-1zM248 557h1v1h-1zM249 552h1v1h-1zM249 553h1v1h-1zM250 552h1v1h-1zM250 555h1v1h-1zM250 559h1v1h-1zM251 553h1v1h-1zM251 554h1v1h-1zM251 555h1v1h-1zM252 534h1v1h-1zM252 541h1v1h-1zM252 559h1v1h-1zM253 537h1v1h-1zM253 553h1v1h-1zM254 543h1v1h-1zM254 551h1v1h-1zM255 547h1v1h-1zM255 549h1v1h-1zM255 552h1v1h-1zM256 553h1v1h-1zM256 554h1v1h-1zM257 534h1v1h-1zM257 551h1v1h-1zM257 556h1v1h-1zM257 557h1v1h-1zM258 555h1v1h-1zM259 558h1v1h-1zM259 559h1v1h-1zM260 554h1v1h-1zM260 557h1v1h-1zM261 552h1v1h-1zM261 559h1v1h-1zM263 540h1v1h-1zM264 510h1v1h-1zM264 552h1v1h-1zM265 549h1v1h-1zM265 555h1v1h-1zM265 556h1v1h-1zM265 558h1v1h-1zM266 548h1v1h-1zM266 551h1v1h-1zM267 528h1v1h-1zM267 550h1v1h-1zM267 554h1v1h-1zM267 557h1v1h-1zM268 547h1v1h-1zM268 556h1v1h-1zM268 559h1v1h-1zM269 554h1v1h-1zM270 541h1v1h-1zM270 556h1v1h-1zM270 559h1v1h-1zM271 555h1v1h-1zM272 540h1v1h-1zM272 544h1v1h-1zM272 547h1v1h-1zM272 548h1v1h-1zM272 552h1v1h-1zM272 556h1v1h-1zM272 558h1v1h-1zM273 530h1v1h-1zM273 532h1v1h-1zM273 534h1v1h-1zM273 536h1v1h-1zM273 540h1v1h-1zM273 547h1v1h-1zM273 548h1v1h-1zM273 559h1v1h-1zM274 524h1v1h-1zM274 525h1v1h-1zM274 526h1v1h-1zM274 527h1v1h-1zM274 530h1v1h-1zM275 549h1v1h-1zM275 550h1v1h-1zM275 553h1v1h-1zM275 555h1v1h-1zM275 557h1v1h-1zM276 549h1v1h-1zM276 550h1v1h-1zM276 552h1v1h-1zM276 555h1v1h-1zM276 556h1v1h-1zM276 559h1v1h-1zM277 539h1v1h-1zM277 546h1v1h-1zM277 551h1v1h-1zM277 552h1v1h-1zM277 553h1v1h-1zM277 558h1v1h-1zM278 549h1v1h-1zM278 552h1v1h-1zM278 555h1v1h-1zM279 532h1v1h-1zM279 552h1v1h-1zM280 550h1v1h-1zM280 551h1v1h-1zM281 524h1v1h-1zM281 552h1v1h-1zM281 554h1v1h-1zM281 555h1v1h-1zM281 557h1v1h-1zM281 558h1v1h-1zM282 539h1v1h-1zM282 542h1v1h-1zM282 544h1v1h-1zM282 546h1v1h-1zM282 551h1v1h-1zM282 554h1v1h-1zM283 525h1v1h-1zM283 554h1v1h-1zM283 558h1v1h-1zM283 559h1v1h-1zM284 555h1v1h-1zM285 533h1v1h-1zM285 546h1v1h-1zM285 551h1v1h-1zM285 555h1v1h-1zM286 544h1v1h-1zM286 555h1v1h-1zM286 557h1v1h-1zM286 559h1v1h-1zM287 548h1v1h-1zM287 553h1v1h-1zM287 556h1v1h-1zM287 557h1v1h-1zM287 559h1v1h-1zM288 545h1v1h-1zM288 551h1v1h-1zM288 553h1v1h-1zM288 555h1v1h-1zM289 547h1v1h-1zM289 551h1v1h-1zM289 557h1v1h-1zM289 558h1v1h-1zM290 545h1v1h-1zM290 556h1v1h-1zM291 551h1v1h-1zM291 556h1v1h-1zM291 558h1v1h-1zM292 541h1v1h-1zM292 550h1v1h-1zM292 552h1v1h-1zM292 553h1v1h-1zM292 556h1v1h-1zM292 558h1v1h-1zM292 559h1v1h-1zM293 547h1v1h-1zM293 551h1v1h-1zM293 553h1v1h-1zM293 554h1v1h-1zM294 531h1v1h-1zM294 553h1v1h-1zM294 554h1v1h-1zM294 555h1v1h-1zM294 558h1v1h-1zM295 539h1v1h-1zM295 543h1v1h-1zM295 550h1v1h-1zM295 552h1v1h-1zM295 553h1v1h-1zM295 559h1v1h-1zM296 543h1v1h-1zM296 545h1v1h-1zM296 555h1v1h-1zM297 553h1v1h-1zM297 554h1v1h-1zM297 558h1v1h-1zM298 534h1v1h-1zM298 545h1v1h-1zM298 547h1v1h-1zM298 549h1v1h-1zM298 552h1v1h-1zM298 555h1v1h-1zM298 558h1v1h-1zM299 543h1v1h-1zM299 545h1v1h-1zM299 555h1v1h-1zM299 558h1v1h-1zM300 548h1v1h-1zM300 551h1v1h-1zM300 558h1v1h-1zM300 559h1v1h-1zM301 525h1v1h-1zM301 527h1v1h-1zM301 535h1v1h-1zM301 541h1v1h-1zM301 550h1v1h-1zM301 551h1v1h-1zM302 532h1v1h-1zM302 547h1v1h-1zM302 548h1v1h-1zM302 550h1v1h-1zM302 551h1v1h-1zM302 556h1v1h-1zM302 559h1v1h-1zM303 555h1v1h-1zM303 559h1v1h-1zM304 532h1v1h-1zM304 554h1v1h-1zM305 508h1v1h-1zM305 520h1v1h-1zM305 557h1v1h-1zM306 533h1v1h-1zM306 551h1v1h-1zM306 554h1v1h-1zM306 556h1v1h-1zM307 527h1v1h-1zM307 530h1v1h-1zM307 531h1v1h-1zM307 536h1v1h-1zM307 538h1v1h-1zM307 553h1v1h-1zM308 516h1v1h-1zM308 531h1v1h-1zM308 544h1v1h-1zM308 547h1v1h-1zM308 556h1v1h-1zM308 559h1v1h-1zM309 534h1v1h-1zM309 549h1v1h-1zM309 552h1v1h-1zM309 557h1v1h-1zM310 525h1v1h-1zM310 549h1v1h-1zM310 555h1v1h-1zM310 556h1v1h-1zM310 557h1v1h-1zM311 550h1v1h-1zM311 551h1v1h-1zM311 552h1v1h-1zM312 557h1v1h-1zM312 559h1v1h-1zM313 549h1v1h-1zM313 553h1v1h-1zM313 556h1v1h-1zM314 550h1v1h-1zM314 554h1v1h-1zM314 559h1v1h-1zM316 545h1v1h-1zM316 547h1v1h-1zM316 552h1v1h-1zM316 555h1v1h-1zM316 557h1v1h-1zM317 557h1v1h-1zM318 553h1v1h-1zM318 556h1v1h-1zM318 558h1v1h-1zM318 559h1v1h-1zM319 547h1v1h-1zM320 540h1v1h-1zM320 545h1v1h-1zM320 549h1v1h-1zM320 550h1v1h-1zM320 551h1v1h-1zM321 540h1v1h-1zM321 543h1v1h-1zM322 535h1v1h-1zM322 552h1v1h-1zM323 532h1v1h-1zM323 553h1v1h-1zM324 535h1v1h-1zM324 558h1v1h-1zM325 530h1v1h-1zM325 537h1v1h-1zM325 545h1v1h-1zM325 551h1v1h-1zM325 554h1v1h-1zM325 557h1v1h-1zM326 545h1v1h-1zM326 554h1v1h-1zM326 557h1v1h-1zM326 558h1v1h-1zM327 556h1v1h-1zM327 559h1v1h-1zM328 554h1v1h-1zM328 559h1v1h-1zM329 543h1v1h-1zM329 546h1v1h-1zM329 548h1v1h-1zM329 551h1v1h-1zM329 553h1v1h-1zM329 554h1v1h-1zM329 557h1v1h-1zM330 547h1v1h-1zM330 548h1v1h-1zM330 551h1v1h-1zM330 556h1v1h-1zM330 558h1v1h-1zM330 559h1v1h-1zM331 539h1v1h-1zM331 540h1v1h-1zM331 543h1v1h-1zM331 553h1v1h-1zM331 556h1v1h-1zM331 558h1v1h-1zM332 541h1v1h-1zM332 547h1v1h-1zM332 550h1v1h-1zM332 551h1v1h-1zM332 559h1v1h-1zM333 546h1v1h-1zM333 548h1v1h-1zM333 555h1v1h-1zM333 556h1v1h-1zM334 494h1v1h-1zM334 503h1v1h-1zM334 525h1v1h-1zM334 528h1v1h-1zM334 530h1v1h-1zM334 544h1v1h-1zM334 553h1v1h-1zM334 555h1v1h-1zM334 558h1v1h-1zM334 559h1v1h-1zM335 496h1v1h-1zM335 502h1v1h-1zM335 506h1v1h-1zM335 510h1v1h-1zM335 558h1v1h-1zM336 505h1v1h-1zM336 528h1v1h-1zM336 531h1v1h-1zM336 546h1v1h-1zM336 549h1v1h-1zM336 551h1v1h-1zM336 555h1v1h-1zM336 559h1v1h-1zM337 518h1v1h-1zM337 554h1v1h-1zM338 549h1v1h-1zM338 550h1v1h-1zM338 554h1v1h-1zM338 556h1v1h-1zM339 546h1v1h-1zM339 552h1v1h-1zM339 553h1v1h-1zM339 556h1v1h-1zM339 557h1v1h-1zM340 548h1v1h-1zM340 557h1v1h-1zM341 531h1v1h-1zM341 538h1v1h-1zM341 544h1v1h-1zM341 551h1v1h-1zM341 553h1v1h-1zM341 554h1v1h-1zM341 555h1v1h-1zM341 557h1v1h-1zM342 538h1v1h-1zM342 545h1v1h-1zM342 553h1v1h-1zM342 555h1v1h-1zM343 487h1v1h-1zM343 491h1v1h-1zM343 494h1v1h-1zM343 501h1v1h-1zM343 525h1v1h-1zM343 541h1v1h-1zM343 545h1v1h-1zM343 551h1v1h-1zM343 552h1v1h-1zM343 557h1v1h-1zM344 495h1v1h-1zM344 499h1v1h-1zM344 506h1v1h-1zM344 509h1v1h-1zM345 508h1v1h-1zM345 514h1v1h-1zM345 527h1v1h-1zM345 538h1v1h-1zM345 544h1v1h-1zM345 548h1v1h-1zM345 558h1v1h-1zM346 539h1v1h-1zM346 541h1v1h-1zM346 543h1v1h-1zM346 551h1v1h-1zM347 552h1v1h-1zM348 557h1v1h-1zM349 544h1v1h-1zM349 555h1v1h-1zM349 556h1v1h-1zM350 550h1v1h-1zM351 546h1v1h-1zM351 547h1v1h-1zM351 548h1v1h-1zM351 550h1v1h-1zM351 553h1v1h-1zM351 557h1v1h-1zM351 558h1v1h-1zM351 559h1v1h-1zM352 543h1v1h-1zM352 553h1v1h-1zM352 556h1v1h-1zM353 548h1v1h-1zM353 554h1v1h-1zM353 556h1v1h-1zM353 557h1v1h-1zM354 549h1v1h-1zM354 553h1v1h-1zM354 556h1v1h-1zM354 557h1v1h-1zM355 536h1v1h-1zM355 539h1v1h-1zM355 551h1v1h-1zM355 552h1v1h-1zM355 555h1v1h-1zM355 556h1v1h-1zM355 558h1v1h-1zM355 559h1v1h-1zM356 543h1v1h-1zM356 551h1v1h-1zM356 552h1v1h-1zM356 554h1v1h-1zM356 558h1v1h-1zM356 559h1v1h-1zM357 552h1v1h-1zM357 556h1v1h-1zM358 535h1v1h-1zM358 548h1v1h-1zM358 552h1v1h-1zM358 554h1v1h-1zM358 558h1v1h-1zM359 551h1v1h-1zM359 553h1v1h-1zM359 558h1v1h-1zM359 559h1v1h-1zM360 553h1v1h-1zM360 554h1v1h-1zM360 555h1v1h-1zM360 558h1v1h-1zM360 559h1v1h-1zM361 520h1v1h-1zM361 551h1v1h-1zM361 554h1v1h-1zM361 556h1v1h-1zM362 515h1v1h-1zM362 549h1v1h-1zM362 558h1v1h-1zM363 535h1v1h-1zM363 544h1v1h-1zM363 550h1v1h-1zM363 552h1v1h-1zM363 553h1v1h-1zM363 557h1v1h-1zM364 533h1v1h-1zM364 550h1v1h-1zM364 554h1v1h-1zM364 555h1v1h-1zM364 557h1v1h-1zM364 559h1v1h-1zM365 555h1v1h-1zM365 556h1v1h-1zM365 557h1v1h-1zM365 559h1v1h-1zM366 555h1v1h-1zM366 556h1v1h-1zM367 542h1v1h-1zM367 547h1v1h-1zM367 554h1v1h-1zM367 557h1v1h-1zM368 527h1v1h-1zM368 540h1v1h-1zM368 552h1v1h-1zM368 554h1v1h-1zM368 556h1v1h-1zM368 557h1v1h-1zM368 558h1v1h-1zM369 527h1v1h-1zM369 528h1v1h-1zM369 536h1v1h-1zM369 551h1v1h-1zM370 526h1v1h-1zM370 530h1v1h-1zM370 556h1v1h-1zM370 560h1v1h-1zM371 548h1v1h-1zM371 550h1v1h-1zM371 554h1v1h-1zM371 557h1v1h-1zM371 558h1v1h-1zM371 559h1v1h-1zM372 549h1v1h-1zM372 550h1v1h-1zM372 552h1v1h-1zM372 556h1v1h-1zM372 559h1v1h-1zM373 530h1v1h-1zM373 548h1v1h-1zM373 555h1v1h-1zM373 558h1v1h-1zM374 553h1v1h-1zM374 557h1v1h-1zM374 559h1v1h-1zM375 545h1v1h-1zM375 547h1v1h-1zM375 549h1v1h-1zM375 557h1v1h-1zM375 558h1v1h-1zM376 545h1v1h-1zM376 553h1v1h-1zM376 554h1v1h-1zM376 555h1v1h-1zM376 556h1v1h-1zM376 557h1v1h-1zM376 558h1v1h-1zM377 538h1v1h-1zM377 545h1v1h-1zM377 553h1v1h-1zM377 555h1v1h-1zM377 556h1v1h-1zM377 559h1v1h-1zM378 552h1v1h-1zM378 555h1v1h-1zM379 553h1v1h-1zM379 554h1v1h-1zM380 554h1v1h-1zM380 555h1v1h-1zM381 545h1v1h-1zM381 549h1v1h-1zM381 552h1v1h-1zM381 556h1v1h-1zM381 557h1v1h-1zM382 548h1v1h-1zM382 552h1v1h-1zM383 545h1v1h-1zM383 548h1v1h-1zM383 555h1v1h-1zM383 559h1v1h-1zM384 543h1v1h-1zM384 546h1v1h-1zM384 550h1v1h-1zM384 559h1v1h-1zM385 514h1v1h-1zM385 544h1v1h-1zM385 547h1v1h-1zM385 554h1v1h-1zM385 556h1v1h-1zM385 558h1v1h-1zM386 542h1v1h-1zM386 545h1v1h-1zM386 553h1v1h-1zM386 559h1v1h-1zM387 549h1v1h-1zM387 550h1v1h-1zM387 559h1v1h-1zM388 548h1v1h-1zM389 509h1v1h-1zM389 551h1v1h-1zM389 554h1v1h-1zM389 555h1v1h-1zM389 557h1v1h-1zM389 559h1v1h-1zM390 544h1v1h-1zM390 549h1v1h-1zM390 550h1v1h-1zM390 557h1v1h-1zM391 532h1v1h-1zM391 551h1v1h-1zM391 555h1v1h-1zM392 539h1v1h-1zM392 546h1v1h-1zM392 553h1v1h-1zM392 556h1v1h-1zM392 558h1v1h-1zM393 534h1v1h-1zM393 536h1v1h-1zM393 549h1v1h-1zM393 556h1v1h-1zM393 557h1v1h-1zM393 558h1v1h-1zM393 559h1v1h-1zM394 535h1v1h-1zM394 541h1v1h-1zM394 552h1v1h-1zM394 554h1v1h-1zM394 557h1v1h-1zM394 559h1v1h-1zM395 482h1v1h-1zM395 497h1v1h-1zM395 514h1v1h-1zM395 521h1v1h-1zM395 524h1v1h-1zM395 553h1v1h-1zM395 555h1v1h-1zM395 559h1v1h-1zM396 486h1v1h-1zM396 497h1v1h-1zM396 499h1v1h-1zM396 502h1v1h-1zM396 513h1v1h-1zM396 514h1v1h-1zM396 553h1v1h-1zM397 489h1v1h-1zM397 490h1v1h-1zM397 495h1v1h-1zM397 496h1v1h-1zM397 498h1v1h-1zM397 500h1v1h-1zM397 501h1v1h-1zM397 513h1v1h-1zM397 520h1v1h-1zM397 525h1v1h-1zM397 528h1v1h-1zM397 535h1v1h-1zM397 536h1v1h-1zM397 537h1v1h-1zM397 543h1v1h-1zM397 547h1v1h-1zM397 556h1v1h-1zM397 557h1v1h-1zM398 547h1v1h-1zM398 550h1v1h-1zM398 552h1v1h-1zM398 559h1v1h-1zM399 506h1v1h-1zM399 536h1v1h-1zM399 550h1v1h-1zM399 551h1v1h-1zM399 552h1v1h-1zM399 557h1v1h-1zM399 559h1v1h-1zM400 541h1v1h-1zM400 544h1v1h-1zM400 551h1v1h-1zM400 552h1v1h-1zM400 558h1v1h-1zM401 548h1v1h-1zM401 550h1v1h-1zM401 551h1v1h-1zM401 552h1v1h-1zM401 555h1v1h-1zM401 557h1v1h-1zM402 546h1v1h-1zM402 547h1v1h-1zM402 549h1v1h-1zM402 550h1v1h-1zM402 552h1v1h-1zM402 554h1v1h-1zM403 543h1v1h-1zM403 552h1v1h-1zM403 553h1v1h-1zM404 517h1v1h-1zM404 543h1v1h-1zM404 552h1v1h-1zM404 556h1v1h-1zM404 557h1v1h-1zM404 558h1v1h-1zM404 559h1v1h-1zM405 490h1v1h-1zM405 491h1v1h-1zM405 496h1v1h-1zM405 524h1v1h-1zM405 525h1v1h-1zM405 526h1v1h-1zM405 528h1v1h-1zM405 531h1v1h-1zM405 539h1v1h-1zM405 559h1v1h-1zM406 480h1v1h-1zM406 490h1v1h-1zM406 499h1v1h-1zM406 511h1v1h-1zM406 512h1v1h-1zM406 513h1v1h-1zM406 515h1v1h-1zM407 480h1v1h-1zM407 485h1v1h-1zM407 490h1v1h-1zM407 507h1v1h-1zM407 509h1v1h-1zM407 522h1v1h-1zM407 526h1v1h-1zM407 531h1v1h-1zM407 539h1v1h-1zM407 541h1v1h-1zM407 552h1v1h-1zM407 554h1v1h-1zM407 558h1v1h-1zM408 554h1v1h-1zM409 533h1v1h-1zM409 548h1v1h-1zM409 551h1v1h-1zM409 555h1v1h-1zM409 558h1v1h-1zM410 522h1v1h-1zM410 543h1v1h-1zM410 547h1v1h-1zM410 555h1v1h-1zM411 544h1v1h-1zM411 551h1v1h-1zM411 554h1v1h-1zM411 557h1v1h-1zM412 546h1v1h-1zM412 552h1v1h-1zM412 555h1v1h-1zM413 533h1v1h-1zM413 544h1v1h-1zM413 548h1v1h-1zM413 550h1v1h-1zM414 480h1v1h-1zM414 487h1v1h-1zM414 506h1v1h-1zM414 515h1v1h-1zM414 525h1v1h-1zM414 528h1v1h-1zM414 530h1v1h-1zM414 535h1v1h-1zM414 537h1v1h-1zM414 543h1v1h-1zM414 553h1v1h-1zM415 476h1v1h-1zM415 478h1v1h-1zM415 509h1v1h-1zM415 510h1v1h-1zM415 513h1v1h-1zM415 540h1v1h-1zM415 551h1v1h-1zM415 552h1v1h-1zM415 553h1v1h-1zM415 556h1v1h-1zM415 558h1v1h-1zM416 476h1v1h-1zM416 480h1v1h-1zM416 482h1v1h-1zM416 506h1v1h-1zM416 512h1v1h-1zM416 513h1v1h-1zM416 520h1v1h-1zM416 527h1v1h-1zM416 530h1v1h-1zM416 548h1v1h-1zM416 557h1v1h-1zM416 559h1v1h-1zM417 540h1v1h-1zM417 541h1v1h-1zM417 550h1v1h-1zM417 551h1v1h-1zM417 554h1v1h-1zM417 556h1v1h-1zM418 543h1v1h-1zM418 555h1v1h-1zM419 550h1v1h-1zM419 558h1v1h-1zM420 546h1v1h-1zM420 547h1v1h-1zM420 556h1v1h-1zM420 559h1v1h-1zM421 540h1v1h-1zM421 543h1v1h-1zM421 547h1v1h-1zM421 549h1v1h-1zM421 552h1v1h-1zM421 553h1v1h-1zM421 555h1v1h-1zM421 557h1v1h-1zM422 536h1v1h-1zM422 553h1v1h-1zM422 554h1v1h-1zM423 544h1v1h-1zM423 547h1v1h-1zM423 558h1v1h-1zM424 514h1v1h-1zM424 548h1v1h-1zM424 551h1v1h-1zM424 556h1v1h-1zM425 551h1v1h-1zM425 552h1v1h-1zM425 558h1v1h-1zM425 559h1v1h-1zM426 553h1v1h-1zM426 558h1v1h-1zM427 544h1v1h-1zM427 550h1v1h-1zM427 557h1v1h-1zM427 558h1v1h-1zM428 524h1v1h-1zM428 547h1v1h-1zM428 558h1v1h-1zM429 534h1v1h-1zM429 542h1v1h-1zM429 553h1v1h-1zM429 554h1v1h-1zM429 556h1v1h-1zM430 543h1v1h-1zM430 550h1v1h-1zM430 555h1v1h-1zM431 548h1v1h-1zM431 549h1v1h-1zM431 552h1v1h-1zM431 554h1v1h-1zM431 555h1v1h-1zM431 556h1v1h-1zM431 559h1v1h-1zM432 510h1v1h-1zM432 530h1v1h-1zM432 549h1v1h-1zM432 553h1v1h-1zM432 558h1v1h-1zM433 513h1v1h-1zM433 522h1v1h-1zM433 546h1v1h-1zM433 549h1v1h-1zM433 556h1v1h-1zM433 559h1v1h-1zM434 509h1v1h-1zM434 518h1v1h-1zM434 534h1v1h-1zM434 553h1v1h-1zM434 555h1v1h-1zM434 557h1v1h-1zM435 510h1v1h-1zM435 517h1v1h-1zM435 521h1v1h-1zM435 526h1v1h-1zM435 529h1v1h-1zM435 530h1v1h-1zM435 557h1v1h-1zM435 559h1v1h-1zM436 548h1v1h-1zM436 552h1v1h-1zM436 553h1v1h-1zM436 558h1v1h-1zM436 560h1v1h-1zM437 552h1v1h-1zM437 554h1v1h-1zM437 559h1v1h-1zM438 517h1v1h-1zM438 543h1v1h-1zM438 555h1v1h-1zM438 558h1v1h-1zM439 539h1v1h-1zM439 547h1v1h-1zM439 549h1v1h-1zM439 551h1v1h-1zM439 559h1v1h-1zM440 535h1v1h-1zM440 540h1v1h-1zM440 551h1v1h-1zM440 554h1v1h-1zM440 556h1v1h-1zM441 546h1v1h-1zM441 549h1v1h-1zM441 554h1v1h-1zM442 547h1v1h-1zM443 534h1v1h-1zM443 558h1v1h-1zM444 550h1v1h-1zM444 552h1v1h-1zM444 553h1v1h-1zM444 557h1v1h-1zM445 549h1v1h-1zM445 552h1v1h-1zM445 556h1v1h-1zM446 515h1v1h-1zM446 549h1v1h-1zM446 554h1v1h-1zM447 546h1v1h-1zM447 550h1v1h-1zM447 551h1v1h-1zM447 555h1v1h-1zM447 557h1v1h-1zM448 551h1v1h-1zM448 553h1v1h-1zM448 554h1v1h-1zM449 555h1v1h-1zM449 559h1v1h-1zM450 552h1v1h-1zM450 553h1v1h-1zM451 526h1v1h-1zM451 548h1v1h-1zM452 539h1v1h-1zM452 541h1v1h-1zM452 559h1v1h-1zM453 541h1v1h-1zM453 551h1v1h-1zM453 552h1v1h-1zM453 553h1v1h-1zM453 557h1v1h-1zM453 558h1v1h-1zM455 551h1v1h-1zM455 555h1v1h-1zM455 556h1v1h-1zM456 546h1v1h-1zM456 555h1v1h-1zM457 545h1v1h-1zM457 547h1v1h-1zM457 551h1v1h-1zM457 558h1v1h-1zM458 549h1v1h-1zM458 550h1v1h-1zM458 551h1v1h-1zM458 556h1v1h-1zM459 532h1v1h-1zM459 540h1v1h-1zM459 550h1v1h-1zM459 553h1v1h-1zM459 555h1v1h-1zM459 556h1v1h-1zM460 547h1v1h-1zM460 551h1v1h-1zM460 552h1v1h-1zM460 555h1v1h-1zM460 556h1v1h-1zM460 558h1v1h-1zM461 546h1v1h-1zM461 550h1v1h-1zM461 551h1v1h-1zM461 555h1v1h-1zM462 546h1v1h-1zM462 551h1v1h-1zM462 554h1v1h-1zM463 528h1v1h-1zM463 551h1v1h-1zM463 553h1v1h-1zM463 558h1v1h-1zM463 559h1v1h-1zM464 528h1v1h-1zM464 550h1v1h-1zM464 555h1v1h-1zM465 538h1v1h-1zM465 555h1v1h-1zM465 558h1v1h-1zM465 559h1v1h-1zM466 546h1v1h-1zM466 548h1v1h-1zM466 550h1v1h-1zM466 551h1v1h-1zM466 554h1v1h-1zM466 555h1v1h-1zM466 557h1v1h-1zM467 519h1v1h-1zM467 534h1v1h-1zM467 546h1v1h-1zM467 551h1v1h-1zM467 553h1v1h-1zM467 555h1v1h-1zM467 556h1v1h-1zM467 558h1v1h-1zM468 544h1v1h-1zM468 550h1v1h-1zM468 555h1v1h-1zM468 558h1v1h-1zM469 505h1v1h-1zM469 542h1v1h-1zM469 550h1v1h-1zM469 551h1v1h-1zM469 555h1v1h-1zM469 558h1v1h-1zM469 559h1v1h-1zM470 503h1v1h-1zM470 504h1v1h-1zM470 506h1v1h-1zM470 511h1v1h-1zM470 515h1v1h-1zM470 534h1v1h-1zM470 536h1v1h-1zM470 538h1v1h-1zM470 553h1v1h-1zM470 554h1v1h-1zM470 557h1v1h-1zM470 558h1v1h-1zM470 560h1v1h-1zM471 490h1v1h-1zM471 493h1v1h-1zM471 495h1v1h-1zM471 496h1v1h-1zM471 518h1v1h-1zM471 519h1v1h-1zM471 550h1v1h-1zM472 495h1v1h-1zM472 523h1v1h-1zM472 529h1v1h-1zM472 535h1v1h-1zM472 538h1v1h-1zM472 546h1v1h-1zM472 547h1v1h-1zM472 554h1v1h-1zM473 556h1v1h-1zM474 538h1v1h-1zM474 543h1v1h-1zM475 523h1v1h-1zM475 524h1v1h-1zM476 480h1v1h-1zM476 481h1v1h-1zM476 482h1v1h-1zM476 488h1v1h-1zM476 489h1v1h-1zM476 491h1v1h-1zM476 492h1v1h-1zM476 494h1v1h-1zM476 496h1v1h-1zM476 503h1v1h-1zM476 507h1v1h-1zM476 513h1v1h-1zM477 492h1v1h-1zM477 495h1v1h-1zM477 498h1v1h-1zM477 513h1v1h-1zM477 528h1v1h-1zM477 529h1v1h-1zM477 553h1v1h-1zM478 540h1v1h-1zM479 519h1v1h-1zM479 537h1v1h-1zM479 549h1v1h-1zM480 514h1v1h-1zM480 517h1v1h-1zM480 523h1v1h-1zM480 524h1v1h-1zM480 525h1v1h-1zM481 523h1v1h-1zM481 548h1v1h-1zM481 553h1v1h-1zM482 511h1v1h-1zM482 517h1v1h-1zM482 542h1v1h-1zM482 557h1v1h-1zM483 485h1v1h-1zM483 502h1v1h-1zM483 505h1v1h-1zM483 509h1v1h-1zM483 511h1v1h-1zM483 513h1v1h-1zM484 505h1v1h-1zM484 528h1v1h-1zM484 534h1v1h-1zM485 546h1v1h-1zM485 556h1v1h-1zM485 559h1v1h-1zM486 529h1v1h-1zM486 548h1v1h-1zM486 549h1v1h-1zM486 550h1v1h-1zM486 554h1v1h-1zM486 556h1v1h-1zM487 530h1v1h-1zM487 548h1v1h-1zM487 551h1v1h-1zM487 559h1v1h-1zM488 554h1v1h-1zM488 557h1v1h-1zM489 541h1v1h-1zM490 510h1v1h-1zM490 547h1v1h-1zM490 552h1v1h-1zM490 555h1v1h-1z" fill="#0a0aa0"/><path d="M115 535h1v1h-1zM116 532h1v1h-1zM116 553h1v1h-1zM116 557h1v1h-1zM116 558h1v1h-1zM116 559h1v1h-1zM117 539h1v1h-1zM117 548h1v1h-1zM118 521h1v1h-1zM118 537h1v1h-1zM118 550h1v1h-1zM118 556h1v1h-1zM119 514h1v1h-1zM119 547h1v1h-1zM119 554h1v1h-1zM120 513h1v1h-1zM120 515h1v1h-1zM120 547h1v1h-1zM120 550h1v1h-1zM120 553h1v1h-1zM120 555h1v1h-1zM120 557h1v1h-1zM120 558h1v1h-1zM121 492h1v1h-1zM121 494h1v1h-1zM121 512h1v1h-1zM121 535h1v1h-1zM121 547h1v1h-1zM121 548h1v1h-1zM121 549h1v1h-1zM121 550h1v1h-1zM121 551h1v1h-1zM121 552h1v1h-1zM121 556h1v1h-1zM121 558h1v1h-1zM121 560h1v1h-1zM122 494h1v1h-1zM122 496h1v1h-1zM122 505h1v1h-1zM122 506h1v1h-1zM122 518h1v1h-1zM122 523h1v1h-1zM122 527h1v1h-1zM122 528h1v1h-1zM122 529h1v1h-1zM122 530h1v1h-1zM122 531h1v1h-1zM122 532h1v1h-1zM122 534h1v1h-1zM122 544h1v1h-1zM123 488h1v1h-1zM123 521h1v1h-1zM123 542h1v1h-1zM123 545h1v1h-1zM123 547h1v1h-1zM123 556h1v1h-1zM123 557h1v1h-1zM123 559h1v1h-1zM123 560h1v1h-1zM124 544h1v1h-1zM124 546h1v1h-1zM124 547h1v1h-1zM124 551h1v1h-1zM124 554h1v1h-1zM124 558h1v1h-1zM125 549h1v1h-1zM125 550h1v1h-1zM125 551h1v1h-1zM125 553h1v1h-1zM125 555h1v1h-1zM125 558h1v1h-1zM126 522h1v1h-1zM126 525h1v1h-1zM126 532h1v1h-1zM126 533h1v1h-1zM126 544h1v1h-1zM127 514h1v1h-1zM127 531h1v1h-1zM127 538h1v1h-1zM127 548h1v1h-1zM127 556h1v1h-1zM128 509h1v1h-1zM128 514h1v1h-1zM128 538h1v1h-1zM128 540h1v1h-1zM128 541h1v1h-1zM128 545h1v1h-1zM128 546h1v1h-1zM128 549h1v1h-1zM128 551h1v1h-1zM128 553h1v1h-1zM128 558h1v1h-1zM128 559h1v1h-1zM129 493h1v1h-1zM129 499h1v1h-1zM129 502h1v1h-1zM129 505h1v1h-1zM129 506h1v1h-1zM129 507h1v1h-1zM129 515h1v1h-1zM129 517h1v1h-1zM129 534h1v1h-1zM129 535h1v1h-1zM129 538h1v1h-1zM129 558h1v1h-1zM130 499h1v1h-1zM130 501h1v1h-1zM130 521h1v1h-1zM130 524h1v1h-1zM130 532h1v1h-1zM130 542h1v1h-1zM130 547h1v1h-1zM130 550h1v1h-1zM130 554h1v1h-1zM130 555h1v1h-1zM131 530h1v1h-1zM131 533h1v1h-1zM131 547h1v1h-1zM131 552h1v1h-1zM131 553h1v1h-1zM131 554h1v1h-1zM132 529h1v1h-1zM132 547h1v1h-1zM132 555h1v1h-1zM132 557h1v1h-1zM133 544h1v1h-1zM133 551h1v1h-1zM133 552h1v1h-1zM133 558h1v1h-1zM134 539h1v1h-1zM134 544h1v1h-1zM134 545h1v1h-1zM134 546h1v1h-1zM134 551h1v1h-1zM134 557h1v1h-1zM136 546h1v1h-1zM136 555h1v1h-1zM136 557h1v1h-1zM137 530h1v1h-1zM137 541h1v1h-1zM137 559h1v1h-1zM138 546h1v1h-1zM139 544h1v1h-1zM139 554h1v1h-1zM144 551h1v1h-1zM148 546h1v1h-1zM148 549h1v1h-1zM149 557h1v1h-1zM150 545h1v1h-1zM156 546h1v1h-1zM158 551h1v1h-1zM158 554h1v1h-1zM160 558h1v1h-1zM162 548h1v1h-1zM164 558h1v1h-1zM166 551h1v1h-1zM167 543h1v1h-1zM167 550h1v1h-1zM175 523h1v1h-1zM175 557h1v1h-1zM177 536h1v1h-1zM177 537h1v1h-1zM180 545h1v1h-1zM183 551h1v1h-1zM184 550h1v1h-1zM184 557h1v1h-1zM185 548h1v1h-1zM186 551h1v1h-1zM187 556h1v1h-1zM189 544h1v1h-1zM191 555h1v1h-1zM192 539h1v1h-1zM195 545h1v1h-1zM196 512h1v1h-1zM196 545h1v1h-1zM196 552h1v1h-1zM198 550h1v1h-1zM198 554h1v1h-1zM200 504h1v1h-1zM200 542h1v1h-1zM201 553h1v1h-1zM201 559h1v1h-1zM202 547h1v1h-1zM202 548h1v1h-1zM202 556h1v1h-1zM203 546h1v1h-1zM203 553h1v1h-1zM203 555h1v1h-1zM204 541h1v1h-1zM204 549h1v1h-1zM204 552h1v1h-1zM204 557h1v1h-1zM204 558h1v1h-1zM205 486h1v1h-1zM205 490h1v1h-1zM205 493h1v1h-1zM205 497h1v1h-1zM205 505h1v1h-1zM205 521h1v1h-1zM205 526h1v1h-1zM205 530h1v1h-1zM205 536h1v1h-1zM205 539h1v1h-1zM205 545h1v1h-1zM205 546h1v1h-1zM205 554h1v1h-1zM205 557h1v1h-1zM205 559h1v1h-1zM206 480h1v1h-1zM206 485h1v1h-1zM206 487h1v1h-1zM206 490h1v1h-1zM206 500h1v1h-1zM206 502h1v1h-1zM206 503h1v1h-1zM206 516h1v1h-1zM206 518h1v1h-1zM206 529h1v1h-1zM206 531h1v1h-1zM206 542h1v1h-1zM206 545h1v1h-1zM207 489h1v1h-1zM207 490h1v1h-1zM207 512h1v1h-1zM207 513h1v1h-1zM207 537h1v1h-1zM207 541h1v1h-1zM207 545h1v1h-1zM207 546h1v1h-1zM207 553h1v1h-1zM207 557h1v1h-1zM208 547h1v1h-1zM208 555h1v1h-1zM208 557h1v1h-1zM208 558h1v1h-1zM208 559h1v1h-1zM209 540h1v1h-1zM209 543h1v1h-1zM209 544h1v1h-1zM209 547h1v1h-1zM209 548h1v1h-1zM209 550h1v1h-1zM209 551h1v1h-1zM209 553h1v1h-1zM209 554h1v1h-1zM209 559h1v1h-1zM210 510h1v1h-1zM210 515h1v1h-1zM210 527h1v1h-1zM210 529h1v1h-1zM210 553h1v1h-1zM210 554h1v1h-1zM211 535h1v1h-1zM211 537h1v1h-1zM211 547h1v1h-1zM211 551h1v1h-1zM211 552h1v1h-1zM211 555h1v1h-1zM211 556h1v1h-1zM211 559h1v1h-1zM212 543h1v1h-1zM212 548h1v1h-1zM212 554h1v1h-1zM213 540h1v1h-1zM213 546h1v1h-1zM213 547h1v1h-1zM213 550h1v1h-1zM213 551h1v1h-1zM213 554h1v1h-1zM213 555h1v1h-1zM213 556h1v1h-1zM214 515h1v1h-1zM214 521h1v1h-1zM214 526h1v1h-1zM214 540h1v1h-1zM214 545h1v1h-1zM214 549h1v1h-1zM214 552h1v1h-1zM214 554h1v1h-1zM214 560h1v1h-1zM215 475h1v1h-1zM215 480h1v1h-1zM215 485h1v1h-1zM215 490h1v1h-1zM215 499h1v1h-1zM215 501h1v1h-1zM215 507h1v1h-1zM215 511h1v1h-1zM215 512h1v1h-1zM215 518h1v1h-1zM215 522h1v1h-1zM215 525h1v1h-1zM215 538h1v1h-1zM215 551h1v1h-1zM215 558h1v1h-1zM216 497h1v1h-1zM216 545h1v1h-1zM216 548h1v1h-1zM216 551h1v1h-1zM216 554h1v1h-1zM216 555h1v1h-1zM218 542h1v1h-1zM218 553h1v1h-1zM218 558h1v1h-1zM220 549h1v1h-1zM220 559h1v1h-1zM221 553h1v1h-1zM221 554h1v1h-1zM222 545h1v1h-1zM222 547h1v1h-1zM222 557h1v1h-1zM223 551h1v1h-1zM224 537h1v1h-1zM224 550h1v1h-1zM224 551h1v1h-1zM225 553h1v1h-1zM228 536h1v1h-1zM229 555h1v1h-1zM230 557h1v1h-1zM230 558h1v1h-1zM231 548h1v1h-1zM232 558h1v1h-1zM234 555h1v1h-1zM236 543h1v1h-1zM239 552h1v1h-1zM240 553h1v1h-1zM241 521h1v1h-1zM241 542h1v1h-1zM241 551h1v1h-1zM241 553h1v1h-1zM241 559h1v1h-1zM242 526h1v1h-1zM242 536h1v1h-1zM242 537h1v1h-1zM242 547h1v1h-1zM242 555h1v1h-1zM243 512h1v1h-1zM243 523h1v1h-1zM243 532h1v1h-1zM244 545h1v1h-1zM244 556h1v1h-1zM246 546h1v1h-1zM247 556h1v1h-1zM248 545h1v1h-1zM252 556h1v1h-1zM254 559h1v1h-1zM255 507h1v1h-1zM255 557h1v1h-1zM256 546h1v1h-1zM258 545h1v1h-1zM261 542h1v1h-1zM264 546h1v1h-1zM264 559h1v1h-1zM267 552h1v1h-1zM267 558h1v1h-1zM269 532h1v1h-1zM269 553h1v1h-1zM270 548h1v1h-1zM271 554h1v1h-1zM271 558h1v1h-1zM273 537h1v1h-1zM273 556h1v1h-1zM273 558h1v1h-1zM274 512h1v1h-1zM274 513h1v1h-1zM274 517h1v1h-1zM274 533h1v1h-1zM274 537h1v1h-1zM274 538h1v1h-1zM274 542h1v1h-1zM274 545h1v1h-1zM274 546h1v1h-1zM274 555h1v1h-1zM275 517h1v1h-1zM275 531h1v1h-1zM275 534h1v1h-1zM275 552h1v1h-1zM275 554h1v1h-1zM277 506h1v1h-1zM279 530h1v1h-1zM281 548h1v1h-1zM282 549h1v1h-1zM282 555h1v1h-1zM285 519h1v1h-1zM285 534h1v1h-1zM288 550h1v1h-1zM291 553h1v1h-1zM291 559h1v1h-1zM294 543h1v1h-1zM294 559h1v1h-1zM296 541h1v1h-1zM296 552h1v1h-1zM297 545h1v1h-1zM298 539h1v1h-1zM298 544h1v1h-1zM298 548h1v1h-1zM298 554h1v1h-1zM298 556h1v1h-1zM299 554h1v1h-1zM300 530h1v1h-1zM300 547h1v1h-1zM300 553h1v1h-1zM300 554h1v1h-1zM300 557h1v1h-1zM301 534h1v1h-1zM301 538h1v1h-1zM301 545h1v1h-1zM301 548h1v1h-1zM301 556h1v1h-1zM302 553h1v1h-1zM302 557h1v1h-1zM303 505h1v1h-1zM303 548h1v1h-1zM303 549h1v1h-1zM303 553h1v1h-1zM304 553h1v1h-1zM304 555h1v1h-1zM304 558h1v1h-1zM304 559h1v1h-1zM305 547h1v1h-1zM305 555h1v1h-1zM305 559h1v1h-1zM306 538h1v1h-1zM306 552h1v1h-1zM306 553h1v1h-1zM306 557h1v1h-1zM307 526h1v1h-1zM307 540h1v1h-1zM307 541h1v1h-1zM307 546h1v1h-1zM307 547h1v1h-1zM307 551h1v1h-1zM308 526h1v1h-1zM308 542h1v1h-1zM308 554h1v1h-1zM308 555h1v1h-1zM308 558h1v1h-1zM309 553h1v1h-1zM309 555h1v1h-1zM310 544h1v1h-1zM310 558h1v1h-1zM311 543h1v1h-1zM312 534h1v1h-1zM313 545h1v1h-1zM318 551h1v1h-1zM321 542h1v1h-1zM322 554h1v1h-1zM323 550h1v1h-1zM325 541h1v1h-1zM325 553h1v1h-1zM328 548h1v1h-1zM329 544h1v1h-1zM331 547h1v1h-1zM332 545h1v1h-1zM332 549h1v1h-1zM332 554h1v1h-1zM332 557h1v1h-1zM333 540h1v1h-1zM333 559h1v1h-1zM334 491h1v1h-1zM334 502h1v1h-1zM334 507h1v1h-1zM334 527h1v1h-1zM334 538h1v1h-1zM334 548h1v1h-1zM334 549h1v1h-1zM334 551h1v1h-1zM335 482h1v1h-1zM335 485h1v1h-1zM335 487h1v1h-1zM335 488h1v1h-1zM335 490h1v1h-1zM335 498h1v1h-1zM335 512h1v1h-1zM335 515h1v1h-1zM335 522h1v1h-1zM335 525h1v1h-1zM335 528h1v1h-1zM335 530h1v1h-1zM335 531h1v1h-1zM335 553h1v1h-1zM336 520h1v1h-1zM336 530h1v1h-1zM336 537h1v1h-1zM336 541h1v1h-1zM336 542h1v1h-1zM336 547h1v1h-1zM336 553h1v1h-1zM336 556h1v1h-1zM337 545h1v1h-1zM337 552h1v1h-1zM337 557h1v1h-1zM337 558h1v1h-1zM337 559h1v1h-1zM338 530h1v1h-1zM338 551h1v1h-1zM338 557h1v1h-1zM339 539h1v1h-1zM339 554h1v1h-1zM339 558h1v1h-1zM339 559h1v1h-1zM340 553h1v1h-1zM340 559h1v1h-1zM341 533h1v1h-1zM341 547h1v1h-1zM342 549h1v1h-1zM342 550h1v1h-1zM342 554h1v1h-1zM343 526h1v1h-1zM343 559h1v1h-1zM344 483h1v1h-1zM344 485h1v1h-1zM344 486h1v1h-1zM344 489h1v1h-1zM344 494h1v1h-1zM344 505h1v1h-1zM344 517h1v1h-1zM344 525h1v1h-1zM344 528h1v1h-1zM344 529h1v1h-1zM344 530h1v1h-1zM345 502h1v1h-1zM345 503h1v1h-1zM345 518h1v1h-1zM345 543h1v1h-1zM345 545h1v1h-1zM345 547h1v1h-1zM345 550h1v1h-1zM345 553h1v1h-1zM345 557h1v1h-1zM346 553h1v1h-1zM346 555h1v1h-1zM346 558h1v1h-1zM348 539h1v1h-1zM348 540h1v1h-1zM348 550h1v1h-1zM349 510h1v1h-1zM349 550h1v1h-1zM349 552h1v1h-1zM349 553h1v1h-1zM350 547h1v1h-1zM350 549h1v1h-1zM350 555h1v1h-1zM351 517h1v1h-1zM351 538h1v1h-1zM351 551h1v1h-1zM352 522h1v1h-1zM352 546h1v1h-1zM352 557h1v1h-1zM353 540h1v1h-1zM353 550h1v1h-1zM354 547h1v1h-1zM354 555h1v1h-1zM355 547h1v1h-1zM356 539h1v1h-1zM356 544h1v1h-1zM357 546h1v1h-1zM358 557h1v1h-1zM359 556h1v1h-1zM361 544h1v1h-1zM361 553h1v1h-1zM362 545h1v1h-1zM363 555h1v1h-1zM363 556h1v1h-1zM364 556h1v1h-1zM365 536h1v1h-1zM365 552h1v1h-1zM366 536h1v1h-1zM366 544h1v1h-1zM366 552h1v1h-1zM366 557h1v1h-1zM368 525h1v1h-1zM368 544h1v1h-1zM368 545h1v1h-1zM368 559h1v1h-1zM369 521h1v1h-1zM369 530h1v1h-1zM369 535h1v1h-1zM369 541h1v1h-1zM369 552h1v1h-1zM370 539h1v1h-1zM370 544h1v1h-1zM370 547h1v1h-1zM370 550h1v1h-1zM370 551h1v1h-1zM370 557h1v1h-1zM371 555h1v1h-1zM374 552h1v1h-1zM374 554h1v1h-1zM376 540h1v1h-1zM377 542h1v1h-1zM378 537h1v1h-1zM378 546h1v1h-1zM379 544h1v1h-1zM381 550h1v1h-1zM382 547h1v1h-1zM384 551h1v1h-1zM384 555h1v1h-1zM385 552h1v1h-1zM387 547h1v1h-1zM387 552h1v1h-1zM388 539h1v1h-1zM388 541h1v1h-1zM388 556h1v1h-1zM388 559h1v1h-1zM390 555h1v1h-1zM391 557h1v1h-1zM392 547h1v1h-1zM392 551h1v1h-1zM392 554h1v1h-1zM393 552h1v1h-1zM393 554h1v1h-1zM393 555h1v1h-1zM394 533h1v1h-1zM394 542h1v1h-1zM394 547h1v1h-1zM395 494h1v1h-1zM395 505h1v1h-1zM395 538h1v1h-1zM395 539h1v1h-1zM395 549h1v1h-1zM395 558h1v1h-1zM395 560h1v1h-1zM396 493h1v1h-1zM396 494h1v1h-1zM396 498h1v1h-1zM396 505h1v1h-1zM396 507h1v1h-1zM396 511h1v1h-1zM396 515h1v1h-1zM396 519h1v1h-1zM396 521h1v1h-1zM396 522h1v1h-1zM396 523h1v1h-1zM396 526h1v1h-1zM396 535h1v1h-1zM396 554h1v1h-1zM396 558h1v1h-1zM397 486h1v1h-1zM397 502h1v1h-1zM397 507h1v1h-1zM397 522h1v1h-1zM397 533h1v1h-1zM397 538h1v1h-1zM397 539h1v1h-1zM397 540h1v1h-1zM397 548h1v1h-1zM397 550h1v1h-1zM397 551h1v1h-1zM397 553h1v1h-1zM397 559h1v1h-1zM398 554h1v1h-1zM398 556h1v1h-1zM399 549h1v1h-1zM399 554h1v1h-1zM400 542h1v1h-1zM400 546h1v1h-1zM400 547h1v1h-1zM400 550h1v1h-1zM400 553h1v1h-1zM402 513h1v1h-1zM402 539h1v1h-1zM402 548h1v1h-1zM402 551h1v1h-1zM402 555h1v1h-1zM402 556h1v1h-1zM402 557h1v1h-1zM403 548h1v1h-1zM403 554h1v1h-1zM403 555h1v1h-1zM403 558h1v1h-1zM403 559h1v1h-1zM404 528h1v1h-1zM404 542h1v1h-1zM404 548h1v1h-1zM404 551h1v1h-1zM405 493h1v1h-1zM405 494h1v1h-1zM405 498h1v1h-1zM405 530h1v1h-1zM405 542h1v1h-1zM405 543h1v1h-1zM405 546h1v1h-1zM405 548h1v1h-1zM405 551h1v1h-1zM405 553h1v1h-1zM405 557h1v1h-1zM406 485h1v1h-1zM406 493h1v1h-1zM406 500h1v1h-1zM406 501h1v1h-1zM406 503h1v1h-1zM406 509h1v1h-1zM406 517h1v1h-1zM406 554h1v1h-1zM407 502h1v1h-1zM407 544h1v1h-1zM407 547h1v1h-1zM407 551h1v1h-1zM407 555h1v1h-1zM407 557h1v1h-1zM407 559h1v1h-1zM408 538h1v1h-1zM408 552h1v1h-1zM408 559h1v1h-1zM409 539h1v1h-1zM409 554h1v1h-1zM409 556h1v1h-1zM409 559h1v1h-1zM410 533h1v1h-1zM410 536h1v1h-1zM410 544h1v1h-1zM410 545h1v1h-1zM410 552h1v1h-1zM410 554h1v1h-1zM410 556h1v1h-1zM411 547h1v1h-1zM411 550h1v1h-1zM412 545h1v1h-1zM412 549h1v1h-1zM412 553h1v1h-1zM412 554h1v1h-1zM412 556h1v1h-1zM412 558h1v1h-1zM413 505h1v1h-1zM413 552h1v1h-1zM413 556h1v1h-1zM414 526h1v1h-1zM414 550h1v1h-1zM415 477h1v1h-1zM415 479h1v1h-1zM415 481h1v1h-1zM415 486h1v1h-1zM415 489h1v1h-1zM415 490h1v1h-1zM415 492h1v1h-1zM415 497h1v1h-1zM415 500h1v1h-1zM415 505h1v1h-1zM415 512h1v1h-1zM415 515h1v1h-1zM415 517h1v1h-1zM415 523h1v1h-1zM415 525h1v1h-1zM415 527h1v1h-1zM415 528h1v1h-1zM415 530h1v1h-1zM415 532h1v1h-1zM415 533h1v1h-1zM416 492h1v1h-1zM416 509h1v1h-1zM416 516h1v1h-1zM416 532h1v1h-1zM416 535h1v1h-1zM416 536h1v1h-1zM416 541h1v1h-1zM416 542h1v1h-1zM416 545h1v1h-1zM416 546h1v1h-1zM416 551h1v1h-1zM416 554h1v1h-1zM416 555h1v1h-1zM417 542h1v1h-1zM417 552h1v1h-1zM417 555h1v1h-1zM419 541h1v1h-1zM420 506h1v1h-1zM420 553h1v1h-1zM420 557h1v1h-1zM421 545h1v1h-1zM421 559h1v1h-1zM422 544h1v1h-1zM422 545h1v1h-1zM422 551h1v1h-1zM423 551h1v1h-1zM423 552h1v1h-1zM423 553h1v1h-1zM424 552h1v1h-1zM425 556h1v1h-1zM426 554h1v1h-1zM427 542h1v1h-1zM428 543h1v1h-1zM428 556h1v1h-1zM428 557h1v1h-1zM429 559h1v1h-1zM430 542h1v1h-1zM431 530h1v1h-1zM431 550h1v1h-1zM431 553h1v1h-1zM432 506h1v1h-1zM432 543h1v1h-1zM433 532h1v1h-1zM434 524h1v1h-1zM434 531h1v1h-1zM434 532h1v1h-1zM434 538h1v1h-1zM434 540h1v1h-1zM434 545h1v1h-1zM434 549h1v1h-1zM434 550h1v1h-1zM435 507h1v1h-1zM435 516h1v1h-1zM435 522h1v1h-1zM435 523h1v1h-1zM435 524h1v1h-1zM435 533h1v1h-1zM435 536h1v1h-1zM435 537h1v1h-1zM435 542h1v1h-1zM435 543h1v1h-1zM436 532h1v1h-1zM436 542h1v1h-1zM436 550h1v1h-1zM436 557h1v1h-1zM436 559h1v1h-1zM437 546h1v1h-1zM438 547h1v1h-1zM438 548h1v1h-1zM438 552h1v1h-1zM438 554h1v1h-1zM439 545h1v1h-1zM439 553h1v1h-1zM441 557h1v1h-1zM441 558h1v1h-1zM441 559h1v1h-1zM442 552h1v1h-1zM443 508h1v1h-1zM443 544h1v1h-1zM446 543h1v1h-1zM448 548h1v1h-1zM452 548h1v1h-1zM454 555h1v1h-1zM455 554h1v1h-1zM455 558h1v1h-1zM456 551h1v1h-1zM461 554h1v1h-1zM462 519h1v1h-1zM462 543h1v1h-1zM462 550h1v1h-1zM464 557h1v1h-1zM464 559h1v1h-1zM465 543h1v1h-1zM465 548h1v1h-1zM465 550h1v1h-1zM465 551h1v1h-1zM465 556h1v1h-1zM466 541h1v1h-1zM466 542h1v1h-1zM466 543h1v1h-1zM466 545h1v1h-1zM466 547h1v1h-1zM467 542h1v1h-1zM467 544h1v1h-1zM467 548h1v1h-1zM467 552h1v1h-1zM467 559h1v1h-1zM468 552h1v1h-1zM468 554h1v1h-1zM468 556h1v1h-1zM468 557h1v1h-1zM468 559h1v1h-1zM469 536h1v1h-1zM469 552h1v1h-1zM469 557h1v1h-1zM470 507h1v1h-1zM470 527h1v1h-1zM470 529h1v1h-1zM470 544h1v1h-1zM470 550h1v1h-1zM470 551h1v1h-1zM470 552h1v1h-1zM470 555h1v1h-1zM470 559h1v1h-1zM471 497h1v1h-1zM471 498h1v1h-1zM471 500h1v1h-1zM471 506h1v1h-1zM471 507h1v1h-1zM471 508h1v1h-1zM471 512h1v1h-1zM471 516h1v1h-1zM471 520h1v1h-1zM471 526h1v1h-1zM471 527h1v1h-1zM471 531h1v1h-1zM471 532h1v1h-1zM471 536h1v1h-1zM471 537h1v1h-1zM472 498h1v1h-1zM472 499h1v1h-1zM472 503h1v1h-1zM472 520h1v1h-1zM472 537h1v1h-1zM472 539h1v1h-1zM472 541h1v1h-1zM472 548h1v1h-1zM472 550h1v1h-1zM472 551h1v1h-1zM472 555h1v1h-1zM472 556h1v1h-1zM472 558h1v1h-1zM473 513h1v1h-1zM473 543h1v1h-1zM473 545h1v1h-1zM473 546h1v1h-1zM473 550h1v1h-1zM473 552h1v1h-1zM473 553h1v1h-1zM473 554h1v1h-1zM473 555h1v1h-1zM474 545h1v1h-1zM474 546h1v1h-1zM474 547h1v1h-1zM474 550h1v1h-1zM474 555h1v1h-1zM474 556h1v1h-1zM474 557h1v1h-1zM475 478h1v1h-1zM475 489h1v1h-1zM475 518h1v1h-1zM475 529h1v1h-1zM475 533h1v1h-1zM475 535h1v1h-1zM475 536h1v1h-1zM475 538h1v1h-1zM475 540h1v1h-1zM475 541h1v1h-1zM475 542h1v1h-1zM475 543h1v1h-1zM475 545h1v1h-1zM475 547h1v1h-1zM475 549h1v1h-1zM475 551h1v1h-1zM475 554h1v1h-1zM475 556h1v1h-1zM475 559h1v1h-1zM475 560h1v1h-1zM476 479h1v1h-1zM476 486h1v1h-1zM476 498h1v1h-1zM476 504h1v1h-1zM476 510h1v1h-1zM476 512h1v1h-1zM476 517h1v1h-1zM476 518h1v1h-1zM476 522h1v1h-1zM476 526h1v1h-1zM476 530h1v1h-1zM476 531h1v1h-1zM476 534h1v1h-1zM476 535h1v1h-1zM476 536h1v1h-1zM476 537h1v1h-1zM476 554h1v1h-1zM476 557h1v1h-1zM477 502h1v1h-1zM477 515h1v1h-1zM477 539h1v1h-1zM477 543h1v1h-1zM477 548h1v1h-1zM477 549h1v1h-1zM477 551h1v1h-1zM477 555h1v1h-1zM477 557h1v1h-1zM478 537h1v1h-1zM478 549h1v1h-1zM478 550h1v1h-1zM478 552h1v1h-1zM478 553h1v1h-1zM478 556h1v1h-1zM479 501h1v1h-1zM479 515h1v1h-1zM479 536h1v1h-1zM479 538h1v1h-1zM479 539h1v1h-1zM479 541h1v1h-1zM479 543h1v1h-1zM479 547h1v1h-1zM479 550h1v1h-1zM479 551h1v1h-1zM479 552h1v1h-1zM479 553h1v1h-1zM479 556h1v1h-1zM479 557h1v1h-1zM479 558h1v1h-1zM480 503h1v1h-1zM480 507h1v1h-1zM480 513h1v1h-1zM480 515h1v1h-1zM480 540h1v1h-1zM480 549h1v1h-1zM480 552h1v1h-1zM480 556h1v1h-1zM481 503h1v1h-1zM481 507h1v1h-1zM481 513h1v1h-1zM481 528h1v1h-1zM481 529h1v1h-1zM481 538h1v1h-1zM481 543h1v1h-1zM481 547h1v1h-1zM481 550h1v1h-1zM481 558h1v1h-1zM482 486h1v1h-1zM482 487h1v1h-1zM482 492h1v1h-1zM482 496h1v1h-1zM482 499h1v1h-1zM482 503h1v1h-1zM482 523h1v1h-1zM482 538h1v1h-1zM482 539h1v1h-1zM482 551h1v1h-1zM482 552h1v1h-1zM482 559h1v1h-1zM483 489h1v1h-1zM483 491h1v1h-1zM483 501h1v1h-1zM483 506h1v1h-1zM483 507h1v1h-1zM483 508h1v1h-1zM483 510h1v1h-1zM483 515h1v1h-1zM483 520h1v1h-1zM483 529h1v1h-1zM483 554h1v1h-1zM483 555h1v1h-1zM483 556h1v1h-1zM484 481h1v1h-1zM484 482h1v1h-1zM484 487h1v1h-1zM484 491h1v1h-1zM484 545h1v1h-1zM484 547h1v1h-1zM484 548h1v1h-1zM484 549h1v1h-1zM484 550h1v1h-1zM484 552h1v1h-1zM484 555h1v1h-1zM484 556h1v1h-1zM484 557h1v1h-1zM484 558h1v1h-1zM484 560h1v1h-1zM485 540h1v1h-1zM485 548h1v1h-1zM485 550h1v1h-1zM485 552h1v1h-1zM485 553h1v1h-1zM485 555h1v1h-1zM485 557h1v1h-1zM485 558h1v1h-1zM486 537h1v1h-1zM486 547h1v1h-1zM486 555h1v1h-1zM486 557h1v1h-1zM487 516h1v1h-1zM487 535h1v1h-1zM487 545h1v1h-1zM487 554h1v1h-1zM488 546h1v1h-1zM488 547h1v1h-1zM488 551h1v1h-1zM489 536h1v1h-1zM489 546h1v1h-1zM489 547h1v1h-1zM489 554h1v1h-1zM489 557h1v1h-1zM489 559h1v1h-1zM490 540h1v1h-1zM490 554h1v1h-1z" fill="#1030d8"/><path d="M115 557h1v1h-1zM116 549h1v1h-1zM116 554h1v1h-1zM117 556h1v1h-1zM117 557h1v1h-1zM117 558h1v1h-1zM117 559h1v1h-1zM118 552h1v1h-1zM118 553h1v1h-1zM118 555h1v1h-1zM119 549h1v1h-1zM119 551h1v1h-1zM119 553h1v1h-1zM119 558h1v1h-1zM120 551h1v1h-1zM120 559h1v1h-1zM122 495h1v1h-1zM122 500h1v1h-1zM122 503h1v1h-1zM122 504h1v1h-1zM122 519h1v1h-1zM122 524h1v1h-1zM122 541h1v1h-1zM122 543h1v1h-1zM122 545h1v1h-1zM122 549h1v1h-1zM122 551h1v1h-1zM122 556h1v1h-1zM123 552h1v1h-1zM123 553h1v1h-1zM123 558h1v1h-1zM124 552h1v1h-1zM124 553h1v1h-1zM124 556h1v1h-1zM124 557h1v1h-1zM126 536h1v1h-1zM126 540h1v1h-1zM126 552h1v1h-1zM126 554h1v1h-1zM126 560h1v1h-1zM127 553h1v1h-1zM127 554h1v1h-1zM127 555h1v1h-1zM127 558h1v1h-1zM127 559h1v1h-1zM129 482h1v1h-1zM129 508h1v1h-1zM129 522h1v1h-1zM129 523h1v1h-1zM129 524h1v1h-1zM129 525h1v1h-1zM129 530h1v1h-1zM129 531h1v1h-1zM129 532h1v1h-1zM129 536h1v1h-1zM129 540h1v1h-1zM129 550h1v1h-1zM129 552h1v1h-1zM129 556h1v1h-1zM130 553h1v1h-1zM130 559h1v1h-1zM132 558h1v1h-1zM133 553h1v1h-1zM133 556h1v1h-1zM135 550h1v1h-1zM148 559h1v1h-1zM155 549h1v1h-1zM155 550h1v1h-1zM155 554h1v1h-1zM162 550h1v1h-1zM169 559h1v1h-1zM191 557h1v1h-1zM197 551h1v1h-1zM199 549h1v1h-1zM200 551h1v1h-1zM201 557h1v1h-1zM203 559h1v1h-1zM205 547h1v1h-1zM205 549h1v1h-1zM205 555h1v1h-1zM205 558h1v1h-1zM206 475h1v1h-1zM206 476h1v1h-1zM206 481h1v1h-1zM206 484h1v1h-1zM206 499h1v1h-1zM206 505h1v1h-1zM206 512h1v1h-1zM206 514h1v1h-1zM206 519h1v1h-1zM206 522h1v1h-1zM206 528h1v1h-1zM206 530h1v1h-1zM206 535h1v1h-1zM206 550h1v1h-1zM206 556h1v1h-1zM206 558h1v1h-1zM207 548h1v1h-1zM207 554h1v1h-1zM207 558h1v1h-1zM207 559h1v1h-1zM208 548h1v1h-1zM208 551h1v1h-1zM208 554h1v1h-1zM210 533h1v1h-1zM210 542h1v1h-1zM210 543h1v1h-1zM210 551h1v1h-1zM210 552h1v1h-1zM212 553h1v1h-1zM212 555h1v1h-1zM213 558h1v1h-1zM214 544h1v1h-1zM214 553h1v1h-1zM215 478h1v1h-1zM215 489h1v1h-1zM215 498h1v1h-1zM215 500h1v1h-1zM215 503h1v1h-1zM215 506h1v1h-1zM215 510h1v1h-1zM215 521h1v1h-1zM215 529h1v1h-1zM215 534h1v1h-1zM215 540h1v1h-1zM215 541h1v1h-1zM215 548h1v1h-1zM215 549h1v1h-1zM215 553h1v1h-1zM215 555h1v1h-1zM215 556h1v1h-1zM216 544h1v1h-1zM216 556h1v1h-1zM217 549h1v1h-1zM218 548h1v1h-1zM218 555h1v1h-1zM218 557h1v1h-1zM219 555h1v1h-1zM224 552h1v1h-1zM230 555h1v1h-1zM230 556h1v1h-1zM231 556h1v1h-1zM241 554h1v1h-1zM241 556h1v1h-1zM242 520h1v1h-1zM242 525h1v1h-1zM242 557h1v1h-1zM242 559h1v1h-1zM243 555h1v1h-1zM248 554h1v1h-1zM257 549h1v1h-1zM259 557h1v1h-1zM260 552h1v1h-1zM265 552h1v1h-1zM270 555h1v1h-1zM273 553h1v1h-1zM274 520h1v1h-1zM274 532h1v1h-1zM274 536h1v1h-1zM274 541h1v1h-1zM274 550h1v1h-1zM274 553h1v1h-1zM274 560h1v1h-1zM276 557h1v1h-1zM277 549h1v1h-1zM277 556h1v1h-1zM280 554h1v1h-1zM281 549h1v1h-1zM282 552h1v1h-1zM289 550h1v1h-1zM297 556h1v1h-1zM299 557h1v1h-1zM300 555h1v1h-1zM301 529h1v1h-1zM301 530h1v1h-1zM301 544h1v1h-1zM301 554h1v1h-1zM303 552h1v1h-1zM303 554h1v1h-1zM303 557h1v1h-1zM307 545h1v1h-1zM307 548h1v1h-1zM307 550h1v1h-1zM307 556h1v1h-1zM307 560h1v1h-1zM309 559h1v1h-1zM310 550h1v1h-1zM314 558h1v1h-1zM315 554h1v1h-1zM321 559h1v1h-1zM322 548h1v1h-1zM326 556h1v1h-1zM329 558h1v1h-1zM331 552h1v1h-1zM333 550h1v1h-1zM335 484h1v1h-1zM335 501h1v1h-1zM335 514h1v1h-1zM335 519h1v1h-1zM335 521h1v1h-1zM335 526h1v1h-1zM335 529h1v1h-1zM335 537h1v1h-1zM335 544h1v1h-1zM335 546h1v1h-1zM335 557h1v1h-1zM337 551h1v1h-1zM338 552h1v1h-1zM339 548h1v1h-1zM339 555h1v1h-1zM341 556h1v1h-1zM343 553h1v1h-1zM343 558h1v1h-1zM344 484h1v1h-1zM344 492h1v1h-1zM344 518h1v1h-1zM344 531h1v1h-1zM344 535h1v1h-1zM344 542h1v1h-1zM344 543h1v1h-1zM344 546h1v1h-1zM344 549h1v1h-1zM344 553h1v1h-1zM344 557h1v1h-1zM344 558h1v1h-1zM344 559h1v1h-1zM346 554h1v1h-1zM347 550h1v1h-1zM347 554h1v1h-1zM348 552h1v1h-1zM348 558h1v1h-1zM348 559h1v1h-1zM349 549h1v1h-1zM350 551h1v1h-1zM350 552h1v1h-1zM350 556h1v1h-1zM351 554h1v1h-1zM352 555h1v1h-1zM352 560h1v1h-1zM354 551h1v1h-1zM357 553h1v1h-1zM361 555h1v1h-1zM362 556h1v1h-1zM367 558h1v1h-1zM368 550h1v1h-1zM369 520h1v1h-1zM369 522h1v1h-1zM369 526h1v1h-1zM369 548h1v1h-1zM369 549h1v1h-1zM369 554h1v1h-1zM369 555h1v1h-1zM369 557h1v1h-1zM371 551h1v1h-1zM372 558h1v1h-1zM377 552h1v1h-1zM381 555h1v1h-1zM386 554h1v1h-1zM386 555h1v1h-1zM389 550h1v1h-1zM390 553h1v1h-1zM394 558h1v1h-1zM395 548h1v1h-1zM395 550h1v1h-1zM396 480h1v1h-1zM396 484h1v1h-1zM396 487h1v1h-1zM396 490h1v1h-1zM396 496h1v1h-1zM396 518h1v1h-1zM396 527h1v1h-1zM396 531h1v1h-1zM396 534h1v1h-1zM396 536h1v1h-1zM396 540h1v1h-1zM396 551h1v1h-1zM396 560h1v1h-1zM397 555h1v1h-1zM401 556h1v1h-1zM403 557h1v1h-1zM404 550h1v1h-1zM404 553h1v1h-1zM404 554h1v1h-1zM405 555h1v1h-1zM406 510h1v1h-1zM406 521h1v1h-1zM406 523h1v1h-1zM406 525h1v1h-1zM406 527h1v1h-1zM406 528h1v1h-1zM406 529h1v1h-1zM406 532h1v1h-1zM406 534h1v1h-1zM406 540h1v1h-1zM406 544h1v1h-1zM406 545h1v1h-1zM406 547h1v1h-1zM406 550h1v1h-1zM406 553h1v1h-1zM406 558h1v1h-1zM407 550h1v1h-1zM408 555h1v1h-1zM408 557h1v1h-1zM410 549h1v1h-1zM410 550h1v1h-1zM410 557h1v1h-1zM410 558h1v1h-1zM410 559h1v1h-1zM411 559h1v1h-1zM412 548h1v1h-1zM413 553h1v1h-1zM413 555h1v1h-1zM413 558h1v1h-1zM414 551h1v1h-1zM415 480h1v1h-1zM415 494h1v1h-1zM415 503h1v1h-1zM415 518h1v1h-1zM415 521h1v1h-1zM415 522h1v1h-1zM415 529h1v1h-1zM415 535h1v1h-1zM415 554h1v1h-1zM415 559h1v1h-1zM416 543h1v1h-1zM416 547h1v1h-1zM417 549h1v1h-1zM417 553h1v1h-1zM419 553h1v1h-1zM421 558h1v1h-1zM422 555h1v1h-1zM426 550h1v1h-1zM426 557h1v1h-1zM427 553h1v1h-1zM429 549h1v1h-1zM430 553h1v1h-1zM432 555h1v1h-1zM433 558h1v1h-1zM435 513h1v1h-1zM435 534h1v1h-1zM435 541h1v1h-1zM435 550h1v1h-1zM435 555h1v1h-1zM435 556h1v1h-1zM436 547h1v1h-1zM437 550h1v1h-1zM437 556h1v1h-1zM439 552h1v1h-1zM440 548h1v1h-1zM441 550h1v1h-1zM446 551h1v1h-1zM448 556h1v1h-1zM452 556h1v1h-1zM462 553h1v1h-1zM467 554h1v1h-1zM468 553h1v1h-1zM469 554h1v1h-1zM469 556h1v1h-1zM470 556h1v1h-1zM471 491h1v1h-1zM471 492h1v1h-1zM471 501h1v1h-1zM471 510h1v1h-1zM471 514h1v1h-1zM471 525h1v1h-1zM471 544h1v1h-1zM471 546h1v1h-1zM471 557h1v1h-1zM471 559h1v1h-1zM472 549h1v1h-1zM472 557h1v1h-1zM472 559h1v1h-1zM473 548h1v1h-1zM473 557h1v1h-1zM473 559h1v1h-1zM474 548h1v1h-1zM474 552h1v1h-1zM474 554h1v1h-1zM474 558h1v1h-1zM475 537h1v1h-1zM475 544h1v1h-1zM475 550h1v1h-1zM475 552h1v1h-1zM475 553h1v1h-1zM475 555h1v1h-1zM475 558h1v1h-1zM476 484h1v1h-1zM476 499h1v1h-1zM476 508h1v1h-1zM476 523h1v1h-1zM476 525h1v1h-1zM476 532h1v1h-1zM476 533h1v1h-1zM476 538h1v1h-1zM476 542h1v1h-1zM476 544h1v1h-1zM476 558h1v1h-1zM477 544h1v1h-1zM477 550h1v1h-1zM477 554h1v1h-1zM477 558h1v1h-1zM478 548h1v1h-1zM478 551h1v1h-1zM478 554h1v1h-1zM478 555h1v1h-1zM478 557h1v1h-1zM478 558h1v1h-1zM478 559h1v1h-1zM479 555h1v1h-1zM479 559h1v1h-1zM480 509h1v1h-1zM480 516h1v1h-1zM480 527h1v1h-1zM480 530h1v1h-1zM480 537h1v1h-1zM480 539h1v1h-1zM480 543h1v1h-1zM480 545h1v1h-1zM480 548h1v1h-1zM480 555h1v1h-1zM480 557h1v1h-1zM480 560h1v1h-1zM481 549h1v1h-1zM481 552h1v1h-1zM481 554h1v1h-1zM481 555h1v1h-1zM481 556h1v1h-1zM481 557h1v1h-1zM481 559h1v1h-1zM482 549h1v1h-1zM482 554h1v1h-1zM482 555h1v1h-1zM482 556h1v1h-1zM482 558h1v1h-1zM483 484h1v1h-1zM483 493h1v1h-1zM483 497h1v1h-1zM483 500h1v1h-1zM483 516h1v1h-1zM483 517h1v1h-1zM483 518h1v1h-1zM483 525h1v1h-1zM483 527h1v1h-1zM483 528h1v1h-1zM483 532h1v1h-1zM483 534h1v1h-1zM483 535h1v1h-1zM483 537h1v1h-1zM483 538h1v1h-1zM483 539h1v1h-1zM483 543h1v1h-1zM483 544h1v1h-1zM483 548h1v1h-1zM483 550h1v1h-1zM483 551h1v1h-1zM483 552h1v1h-1zM483 553h1v1h-1zM483 557h1v1h-1zM484 559h1v1h-1zM486 552h1v1h-1zM486 558h1v1h-1zM486 559h1v1h-1zM487 549h1v1h-1zM488 559h1v1h-1zM489 551h1v1h-1zM490 557h1v1h-1zM490 558h1v1h-1z" fill="#1878d8"/><path d="M116 551h1v1h-1zM119 559h1v1h-1zM121 559h1v1h-1zM122 533h1v1h-1zM122 535h1v1h-1zM122 537h1v1h-1zM122 538h1v1h-1zM122 542h1v1h-1zM122 558h1v1h-1zM126 541h1v1h-1zM126 542h1v1h-1zM126 555h1v1h-1zM126 556h1v1h-1zM129 521h1v1h-1zM129 526h1v1h-1zM129 529h1v1h-1zM129 541h1v1h-1zM129 546h1v1h-1zM129 551h1v1h-1zM129 553h1v1h-1zM129 554h1v1h-1zM129 555h1v1h-1zM129 557h1v1h-1zM129 559h1v1h-1zM134 558h1v1h-1zM134 559h1v1h-1zM140 557h1v1h-1zM170 555h1v1h-1zM206 520h1v1h-1zM206 523h1v1h-1zM206 525h1v1h-1zM206 526h1v1h-1zM206 533h1v1h-1zM206 534h1v1h-1zM206 536h1v1h-1zM206 537h1v1h-1zM206 539h1v1h-1zM206 541h1v1h-1zM206 543h1v1h-1zM206 544h1v1h-1zM209 552h1v1h-1zM210 549h1v1h-1zM212 557h1v1h-1zM212 558h1v1h-1zM214 551h1v1h-1zM214 556h1v1h-1zM215 517h1v1h-1zM215 519h1v1h-1zM215 520h1v1h-1zM215 524h1v1h-1zM215 526h1v1h-1zM215 530h1v1h-1zM215 533h1v1h-1zM215 537h1v1h-1zM215 539h1v1h-1zM215 542h1v1h-1zM215 543h1v1h-1zM215 545h1v1h-1zM215 550h1v1h-1zM215 557h1v1h-1zM219 558h1v1h-1zM220 551h1v1h-1zM222 553h1v1h-1zM228 558h1v1h-1zM231 554h1v1h-1zM233 555h1v1h-1zM237 554h1v1h-1zM242 539h1v1h-1zM242 542h1v1h-1zM242 544h1v1h-1zM242 545h1v1h-1zM242 546h1v1h-1zM242 549h1v1h-1zM242 553h1v1h-1zM248 556h1v1h-1zM259 554h1v1h-1zM274 540h1v1h-1zM274 549h1v1h-1zM297 555h1v1h-1zM307 543h1v1h-1zM307 557h1v1h-1zM319 556h1v1h-1zM335 520h1v1h-1zM335 524h1v1h-1zM335 542h1v1h-1zM335 550h1v1h-1zM335 555h1v1h-1zM335 559h1v1h-1zM337 556h1v1h-1zM344 521h1v1h-1zM344 533h1v1h-1zM344 537h1v1h-1zM344 545h1v1h-1zM345 559h1v1h-1zM346 559h1v1h-1zM347 559h1v1h-1zM349 558h1v1h-1zM352 552h1v1h-1zM366 559h1v1h-1zM369 540h1v1h-1zM369 542h1v1h-1zM369 553h1v1h-1zM369 559h1v1h-1zM385 555h1v1h-1zM387 551h1v1h-1zM395 551h1v1h-1zM396 516h1v1h-1zM396 530h1v1h-1zM396 559h1v1h-1zM400 555h1v1h-1zM403 556h1v1h-1zM405 554h1v1h-1zM405 558h1v1h-1zM406 519h1v1h-1zM406 524h1v1h-1zM406 526h1v1h-1zM406 530h1v1h-1zM406 531h1v1h-1zM406 541h1v1h-1zM406 548h1v1h-1zM406 552h1v1h-1zM406 555h1v1h-1zM406 556h1v1h-1zM406 557h1v1h-1zM406 559h1v1h-1zM407 556h1v1h-1zM409 553h1v1h-1zM414 552h1v1h-1zM415 536h1v1h-1zM419 559h1v1h-1zM423 555h1v1h-1zM430 554h1v1h-1zM431 551h1v1h-1zM435 535h1v1h-1zM435 539h1v1h-1zM435 540h1v1h-1zM435 544h1v1h-1zM435 549h1v1h-1zM435 552h1v1h-1zM435 553h1v1h-1zM449 551h1v1h-1zM471 523h1v1h-1zM471 529h1v1h-1zM471 530h1v1h-1zM471 533h1v1h-1zM471 539h1v1h-1zM471 545h1v1h-1zM471 547h1v1h-1zM471 551h1v1h-1zM471 555h1v1h-1zM472 552h1v1h-1zM472 553h1v1h-1zM473 551h1v1h-1zM473 558h1v1h-1zM474 551h1v1h-1zM474 553h1v1h-1zM474 559h1v1h-1zM476 515h1v1h-1zM476 520h1v1h-1zM476 539h1v1h-1zM476 543h1v1h-1zM476 546h1v1h-1zM476 548h1v1h-1zM476 560h1v1h-1zM477 559h1v1h-1zM479 554h1v1h-1zM480 531h1v1h-1zM480 533h1v1h-1zM480 535h1v1h-1zM480 541h1v1h-1zM480 544h1v1h-1zM480 546h1v1h-1zM480 554h1v1h-1zM483 521h1v1h-1zM483 533h1v1h-1zM483 558h1v1h-1zM484 553h1v1h-1zM485 551h1v1h-1zM487 556h1v1h-1zM489 553h1v1h-1z" fill="#1098f8"/><path d="M119 552h1v1h-1zM120 554h1v1h-1zM122 552h1v1h-1zM122 553h1v1h-1zM132 553h1v1h-1zM136 556h1v1h-1zM206 549h1v1h-1zM206 551h1v1h-1zM206 552h1v1h-1zM206 555h1v1h-1zM206 557h1v1h-1zM210 555h1v1h-1zM212 556h1v1h-1zM215 535h1v1h-1zM215 546h1v1h-1zM215 547h1v1h-1zM215 554h1v1h-1zM218 556h1v1h-1zM221 555h1v1h-1zM221 556h1v1h-1zM226 553h1v1h-1zM274 557h1v1h-1zM301 557h1v1h-1zM315 559h1v1h-1zM335 536h1v1h-1zM335 554h1v1h-1zM335 556h1v1h-1zM344 555h1v1h-1zM344 556h1v1h-1zM352 554h1v1h-1zM379 557h1v1h-1zM396 542h1v1h-1zM396 546h1v1h-1zM396 549h1v1h-1zM396 550h1v1h-1zM396 556h1v1h-1zM398 551h1v1h-1zM398 557h1v1h-1zM402 553h1v1h-1zM406 546h1v1h-1zM411 556h1v1h-1zM415 539h1v1h-1zM415 545h1v1h-1zM415 555h1v1h-1zM418 553h1v1h-1zM424 553h1v1h-1zM432 556h1v1h-1zM452 558h1v1h-1zM463 556h1v1h-1zM471 541h1v1h-1zM471 542h1v1h-1zM471 548h1v1h-1zM471 552h1v1h-1zM471 553h1v1h-1zM471 554h1v1h-1zM475 557h1v1h-1zM476 547h1v1h-1zM476 551h1v1h-1zM476 553h1v1h-1zM476 556h1v1h-1zM476 559h1v1h-1zM477 552h1v1h-1zM477 556h1v1h-1zM480 547h1v1h-1zM480 550h1v1h-1zM480 551h1v1h-1zM480 558h1v1h-1zM480 559h1v1h-1zM482 553h1v1h-1zM483 545h1v1h-1zM483 547h1v1h-1zM483 549h1v1h-1zM483 560h1v1h-1zM486 553h1v1h-1z" fill="#00d8f8"/><path d="M122 539h1v1h-1zM122 540h1v1h-1zM122 547h1v1h-1zM122 548h1v1h-1zM122 550h1v1h-1zM122 555h1v1h-1zM126 549h1v1h-1zM126 551h1v1h-1zM126 553h1v1h-1zM126 557h1v1h-1zM129 543h1v1h-1zM129 544h1v1h-1zM129 548h1v1h-1zM206 546h1v1h-1zM206 554h1v1h-1zM206 559h1v1h-1zM206 560h1v1h-1zM210 558h1v1h-1zM215 536h1v1h-1zM215 552h1v1h-1zM215 559h1v1h-1zM215 560h1v1h-1zM274 548h1v1h-1zM274 558h1v1h-1zM274 559h1v1h-1zM301 553h1v1h-1zM301 559h1v1h-1zM307 555h1v1h-1zM335 540h1v1h-1zM335 547h1v1h-1zM335 548h1v1h-1zM335 552h1v1h-1zM344 539h1v1h-1zM344 544h1v1h-1zM344 548h1v1h-1zM344 550h1v1h-1zM344 554h1v1h-1zM396 537h1v1h-1zM396 538h1v1h-1zM396 541h1v1h-1zM396 545h1v1h-1zM406 536h1v1h-1zM406 538h1v1h-1zM406 539h1v1h-1zM406 542h1v1h-1zM415 537h1v1h-1zM415 548h1v1h-1zM415 550h1v1h-1zM415 560h1v1h-1zM435 545h1v1h-1zM435 547h1v1h-1zM435 554h1v1h-1zM435 558h1v1h-1zM471 540h1v1h-1zM471 549h1v1h-1zM471 556h1v1h-1zM471 558h1v1h-1zM476 545h1v1h-1zM476 549h1v1h-1zM476 552h1v1h-1zM476 555h1v1h-1zM480 553h1v1h-1zM483 540h1v1h-1zM483 541h1v1h-1zM483 546h1v1h-1zM483 559h1v1h-1z" fill="#30e8a0"/></g></svg>
<div style="position:absolute;left:491px;top:317px;width:1px;height:258px;background:#fff"></div>
<div style="position:absolute;left:115px;top:574px;width:377px;height:1px;background:#fff"></div>
<div class="lab" style="top:566.3px">0</div>
<div class="tick" style="top:573px"></div>
<div class="lab" style="top:543.1px">2</div>
<div class="tick" style="top:550px"></div>
<div class="lab" style="top:519.9px">4</div>
<div class="tick" style="top:527px"></div>
<div class="lab" style="top:496.7px">6</div>
<div class="tick" style="top:504px"></div>
<div class="lab" style="top:473.5px">8</div>
<div class="tick" style="top:480px"></div>
<div class="lab" style="top:450.3px">10</div>
<div class="tick" style="top:457px"></div>
<div class="lab" style="top:427.1px">12</div>
<div class="tick" style="top:434px"></div>
<div class="lab" style="top:403.9px">14</div>
<div class="tick" style="top:411px"></div>
<div class="lab" style="top:380.7px">16</div>
<div class="tick" style="top:388px"></div>
<div class="lab" style="top:357.5px">18</div>
<div class="tick" style="top:364px"></div>
<div class="lab" style="top:334.3px">20</div>
<div class="tick" style="top:341px"></div>
<div class="lab" style="top:311.1px">22</div>
<div class="tick" style="top:318px"></div>
<svg style="position:absolute;left:0;top:0" width="933" height="593"><rect x="116" y="575" width="1" height="1" fill="#000"/><rect x="138" y="575" width="1" height="1" fill="#000"/><rect x="159" y="575" width="1" height="1" fill="#000"/><rect x="181" y="575" width="1" height="1" fill="#000"/><rect x="202" y="575" width="1" height="3" fill="#000"/><rect x="224" y="575" width="1" height="1" fill="#000"/><rect x="246" y="575" width="1" height="1" fill="#000"/><rect x="267" y="575" width="1" height="1" fill="#000"/><rect x="289" y="575" width="1" height="3" fill="#000"/><rect x="310" y="575" width="1" height="1" fill="#000"/><rect x="332" y="575" width="1" height="1" fill="#000"/><rect x="353" y="575" width="1" height="1" fill="#000"/><rect x="375" y="575" width="1" height="3" fill="#000"/><rect x="396" y="575" width="1" height="1" fill="#000"/><rect x="418" y="575" width="1" height="1" fill="#000"/><rect x="440" y="575" width="1" height="1" fill="#000"/><rect x="461" y="575" width="1" height="3" fill="#000"/><rect x="483" y="575" width="1" height="1" fill="#000"/></svg>
<div class="txt c" style="left:191.5px;top:577px;width:20px">2</div>
<div class="txt c" style="left:277.7px;top:577px;width:20px">4</div>
<div class="txt c" style="left:363.9px;top:577px;width:20px">6</div>
<div class="txt c" style="left:450.1px;top:577px;width:20px">8</div>
<div class="txt" style="left:495px;top:566px;">0</div>
<div class="txt" style="left:496px;top:579px;">s</div>
<div class="sunk" style="left:8px;top:316px;width:72px;height:259px"></div>
<svg style="position:absolute;left:0;top:0" width="933" height="593" shape-rendering="crispEdges"><line x1="10" y1="573.5" x2="77" y2="573.5" stroke="#808080" stroke-width="1" stroke-dasharray="3 3"/><line x1="10" y1="550.5" x2="77" y2="550.5" stroke="#808080" stroke-width="1" stroke-dasharray="3 3"/><line x1="10" y1="527.5" x2="77" y2="527.5" stroke="#808080" stroke-width="1" stroke-dasharray="3 3"/><line x1="10" y1="504.5" x2="77" y2="504.5" stroke="#808080" stroke-width="1" stroke-dasharray="3 3"/><line x1="10" y1="480.5" x2="77" y2="480.5" stroke="#808080" stroke-width="1" stroke-dasharray="3 3"/><line x1="10" y1="457.5" x2="77" y2="457.5" stroke="#808080" stroke-width="1" stroke-dasharray="3 3"/><line x1="10" y1="434.5" x2="77" y2="434.5" stroke="#808080" stroke-width="1" stroke-dasharray="3 3"/><line x1="10" y1="411.5" x2="77" y2="411.5" stroke="#808080" stroke-width="1" stroke-dasharray="3 3"/><line x1="10" y1="388.5" x2="77" y2="388.5" stroke="#808080" stroke-width="1" stroke-dasharray="3 3"/><line x1="10" y1="364.5" x2="77" y2="364.5" stroke="#808080" stroke-width="1" stroke-dasharray="3 3"/><line x1="10" y1="341.5" x2="77" y2="341.5" stroke="#808080" stroke-width="1" stroke-dasharray="3 3"/><line x1="10" y1="318.5" x2="77" y2="318.5" stroke="#808080" stroke-width="1" stroke-dasharray="3 3"/><path d="M79 317 L78 317 L78 317 L78 318 L78 318 L78 319 L78 319 L78 320 L78 320 L78 321 L78 321 L78 322 L78 322 L78 323 L78 323 L78 324 L78 324 L78 325 L78 325 L78 326 L78 326 L78 327 L78 327 L78 328 L78 328 L78 329 L78 329 L78 330 L78 330 L78 331 L78 331 L78 332 L78 332 L78 333 L78 333 L78 334 L78 334 L78 335 L78 335 L78 336 L78 336 L78 337 L78 337 L78 338 L78 338 L78 339 L78 339 L78 340 L78 340 L78 341 L78 341 L78 342 L78 342 L78 343 L78 343 L78 344 L78 344 L78 345 L78 345 L78 346 L78 346 L78 347 L78 347 L78 348 L78 348 L78 349 L78 349 L78 350 L78 350 L78 351 L78 351 L78 352 L78 352 L78 353 L78 353 L78 354 L78 354 L78 355 L78 355 L78 356 L78 356 L78 357 L78 357 L78 358 L78 358 L78 359 L78 359 L78 360 L78 360 L78 361 L78 361 L78 362 L78 362 L78 363 L78 363 L78 364 L78 364 L78 365 L78 365 L78 366 L78 366 L78 367 L78 367 L78 368 L78 368 L78 369 L78 369 L78 370 L78 370 L78 371 L78 371 L78 372 L78 372 L78 373 L78 373 L78 374 L78 374 L78 375 L78 375 L78 376 L78 376 L78 377 L78 377 L78 378 L78 378 L78 379 L78 379 L78 380 L78 380 L78 381 L78 381 L78 382 L78 382 L78 383 L78 383 L78 384 L78 384 L78 385 L78 385 L78 386 L78 386 L78 387 L78 387 L78 388 L78 388 L78 389 L78 389 L78 390 L78 390 L78 391 L78 391 L78 392 L78 392 L78 393 L78 393 L78 394 L78 394 L78 395 L78 395 L78 396 L78 396 L78 397 L78 397 L78 398 L78 398 L78 399 L78 399 L78 400 L78 400 L78 401 L78 401 L78 402 L78 402 L78 403 L78 403 L78 404 L78 404 L78 405 L78 405 L78 406 L78 406 L78 407 L78 407 L78 408 L78 408 L78 409 L78 409 L78 410 L78 410 L78 411 L78 411 L78 412 L78 412 L78 413 L78 413 L78 414 L78 414 L78 415 L78 415 L78 416 L78 416 L78 417 L78 417 L78 418 L78 418 L78 419 L78 419 L78 420 L78 420 L78 421 L78 421 L78 422 L78 422 L78 423 L78 423 L78 424 L78 424 L78 425 L78 425 L78 426 L78 426 L78 427 L78 427 L78 428 L78 428 L78 429 L78 429 L78 430 L78 430 L78 431 L78 431 L78 432 L78 432 L78 433 L78 433 L78 434 L78 434 L78 435 L78 435 L78 436 L78 436 L78 437 L78 437 L78 438 L78 438 L78 439 L78 439 L78 440 L78 440 L78 441 L78 441 L78 442 L78 442 L78 443 L78 443 L78 444 L78 444 L78 445 L78 445 L78 446 L78 446 L78 447 L78 447 L78 448 L78 448 L78 449 L78 449 L78 450 L78 450 L78 451 L78 451 L78 452 L77 452 L77 453 L77 453 L77 454 L77 454 L77 455 L77 455 L77 456 L77 456 L77 457 L77 457 L77 458 L77 458 L77 459 L77 459 L77 460 L77 460 L77 461 L77 461 L77 462 L77 462 L77 463 L77 463 L77 464 L77 464 L77 465 L77 465 L77 466 L77 466 L77 467 L77 467 L77 468 L77 468 L77 469 L77 469 L77 470 L77 470 L77 471 L76 471 L76 472 L76 472 L76 473 L76 473 L76 474 L76 474 L76 475 L76 475 L76 476 L76 476 L76 477 L76 477 L76 478 L76 478 L76 479 L76 479 L76 480 L76 480 L76 481 L75 481 L75 482 L76 482 L76 483 L75 483 L75 484 L76 484 L76 485 L75 485 L75 486 L74 486 L74 487 L74 487 L74 488 L75 488 L75 489 L74 489 L74 490 L74 490 L74 491 L75 491 L75 492 L74 492 L74 493 L75 493 L75 494 L73 494 L73 495 L74 495 L74 496 L72 496 L72 497 L73 497 L73 498 L73 498 L73 499 L72 499 L72 500 L72 500 L72 501 L71 501 L71 502 L70 502 L70 503 L71 503 L71 504 L70 504 L70 505 L69 505 L69 506 L68 506 L68 507 L70 507 L70 508 L68 508 L68 509 L68 509 L68 510 L68 510 L68 511 L68 511 L68 512 L68 512 L68 513 L66 513 L66 514 L67 514 L67 515 L65 515 L65 516 L66 516 L66 517 L65 517 L65 518 L63 518 L63 519 L63 519 L63 520 L62 520 L62 521 L64 521 L64 522 L62 522 L62 523 L62 523 L62 524 L59 524 L59 525 L59 525 L59 526 L57 526 L57 527 L56 527 L56 528 L55 528 L55 529 L54 529 L54 530 L54 530 L54 531 L53 531 L53 532 L52 532 L52 533 L51 533 L51 534 L50 534 L50 535 L48 535 L48 536 L45 536 L45 537 L46 537 L46 538 L44 538 L44 539 L43 539 L43 540 L40 540 L40 541 L39 541 L39 542 L36 542 L36 543 L36 543 L36 544 L33 544 L33 545 L30 545 L30 546 L28 546 L28 547 L28 547 L28 548 L26 548 L26 549 L22 549 L22 550 L21 550 L21 551 L18 551 L18 552 L15 552 L15 553 L14 553 L14 554 L14 554 L14 555 L14 555 L14 556 L17 556 L17 557 L20 557 L20 558 L29 558 L29 559 L39 559 L39 560 L47 560 L47 561 L56 561 L56 562 L64 562 L64 563 L70 563 L70 564 L77 564 L77 565 L77 565 L77 566 L77 566 L77 567 L77 567 L77 568 L77 568 L77 569 L77 569 L77 570 L77 570 L77 571 L77 571 L77 572 L77 572 L77 573 L77 573 L77 574 L79 574Z" fill="#000"/></svg>
<div class="txt" style="left:8px;top:577px;letter-spacing:-0.35px">0.000- 8.703</div>
</body></html>
